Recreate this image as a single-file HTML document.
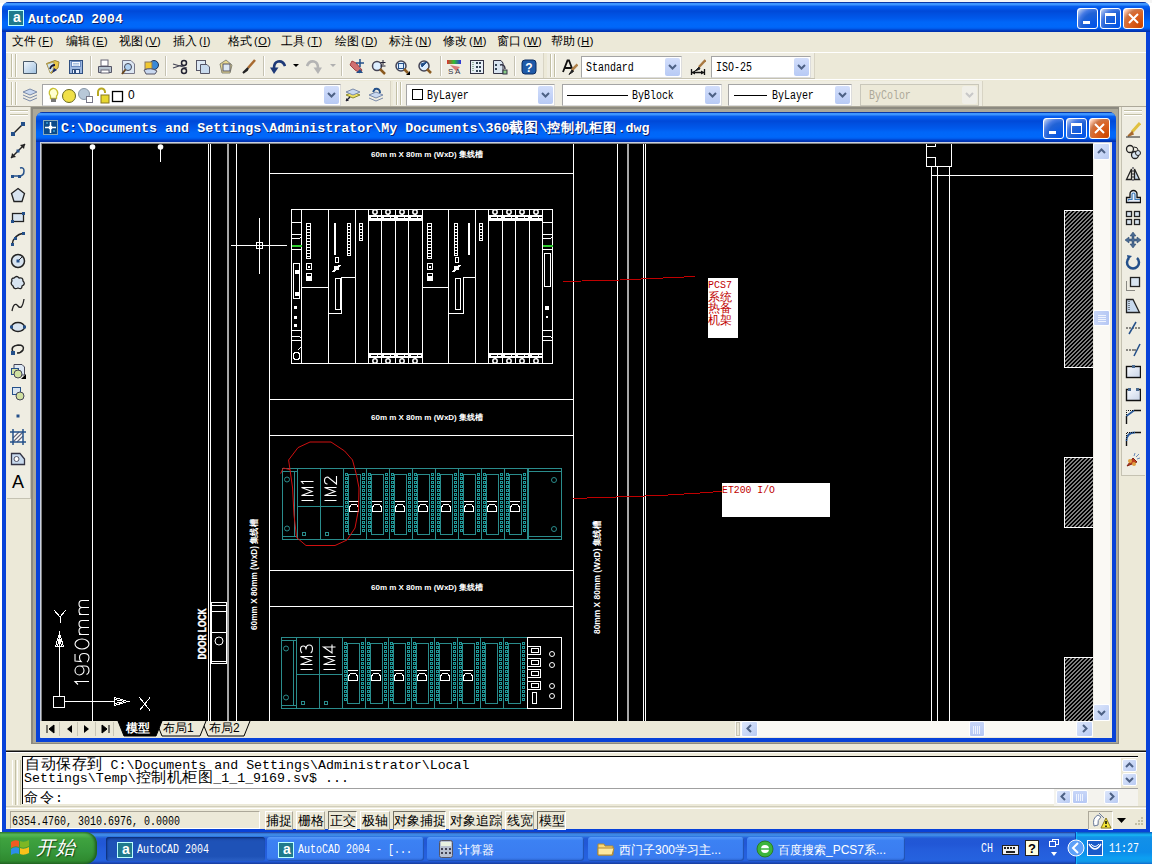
<!DOCTYPE html><html><head><meta charset="utf-8"><style>
*{margin:0;padding:0;box-sizing:border-box}
html,body{width:1152px;height:864px;overflow:hidden;background:#fff;font-family:"Liberation Sans",sans-serif;font-size:12px;color:#000}
.a{position:absolute}
.mono{font-family:"Liberation Mono",monospace}
.cjk{font-family:"Liberation Sans",sans-serif}
.tb{background:#ECE9D8}
.wbtn{position:absolute;width:21px;height:21px;border:1px solid #fff;border-radius:3px;
 background:radial-gradient(circle at 90% 90%,#0054e9 0%,#2263d5 55%,#4479e4 70%,#a3bbec 90%,#fff 100%)}
.wbtn.cl{background:radial-gradient(circle at 90% 90%,#cc4600 0%,#dc6527 55%,#cd7546 70%,#ffccb2 90%,#fff 100%)}
.combo{position:absolute;background:#fff;border:1px solid;border-color:#A5A5A5 #DCDCDC #DCDCDC #A5A5A5}
.dd{position:absolute;right:1px;top:1px;bottom:1px;width:15px;background:linear-gradient(#D2DEFB,#B7CAF5);border-radius:2px}
.grip{position:absolute;width:2px;border-left:1px solid #C2BFA5;border-right:1px solid #fff}
.sep{position:absolute;width:2px;border-left:1px solid #C5C2B2;border-right:1px solid #fff}
.stb{position:absolute;top:812px;height:17px;font-size:12px;line-height:16px;text-align:center}
.tbtn{position:absolute;top:837px;height:24px;border-radius:3px;color:#fff;font-size:12px;line-height:25px;white-space:nowrap;overflow:hidden}
</style></head><body>
<div class="a" style="left:0;top:0;width:1152px;height:3px;background:#F4F4F4"></div>
<div class="a" style="left:2px;top:2px;width:1148px;height:830px;background:#0842D8;border-radius:7px 7px 0 0"></div>
<div class="a" style="left:2px;top:2px;width:1148px;height:30px;background:linear-gradient(180deg,#0838A8 0px,#0838A8 1px,#3D95FF 1px,#3D95FF 3px,#0A5FEE 4px,#0058EE 6px,#0049D8 9px,#0050E0 12px,#0058EA 16px,#0066F8 20px,#0068FA 25px,#0058E8 27px,#0040C8 28px,#002EA8 30px);border-radius:7px 7px 0 0"></div>
<div class="a tb" style="left:6px;top:32px;width:1140px;height:797px"></div>
<div class="a" style="left:8px;top:10px;width:16px;height:16px;background:#1F7A8C;border:1px solid #BFF"><div class="a" style="left:2px;top:-2px;width:12px;height:16px;color:#fff;font:bold 14px 'Liberation Sans';text-align:center">a</div></div>
<div class="a mono" style="left:28px;top:12px;color:#fff;font-weight:bold;font-size:13px;line-height:16px;text-shadow:1px 1px 0 #0A1E6E;letter-spacing:0.1px">AutoCAD 2004</div>
<div class="wbtn" style="left:1077px;top:8px"><div class="a" style="left:5px;top:12px;width:7px;height:3px;background:#fff"></div></div><div class="wbtn" style="left:1100px;top:8px"><div class="a" style="left:4px;top:4px;width:11px;height:11px;border:1px solid #fff;border-top-width:3px"></div></div><div class="wbtn cl" style="left:1123px;top:8px"><svg class="a" style="left:3px;top:3px" width="13" height="13"><path d="M2 2L11 11M11 2L2 11" stroke="#fff" stroke-width="2"/></svg></div>
<div class="a" style="left:12px;top:34px;font-size:12px;line-height:14px;white-space:nowrap">文件<span style="font-size:11px;margin-left:2px;letter-spacing:0.5px">(<u>F</u>)</span></div>
<div class="a" style="left:66px;top:34px;font-size:12px;line-height:14px;white-space:nowrap">编辑<span style="font-size:11px;margin-left:2px;letter-spacing:0.5px">(<u>E</u>)</span></div>
<div class="a" style="left:119px;top:34px;font-size:12px;line-height:14px;white-space:nowrap">视图<span style="font-size:11px;margin-left:2px;letter-spacing:0.5px">(<u>V</u>)</span></div>
<div class="a" style="left:173px;top:34px;font-size:12px;line-height:14px;white-space:nowrap">插入<span style="font-size:11px;margin-left:2px;letter-spacing:0.5px">(<u>I</u>)</span></div>
<div class="a" style="left:228px;top:34px;font-size:12px;line-height:14px;white-space:nowrap">格式<span style="font-size:11px;margin-left:2px;letter-spacing:0.5px">(<u>O</u>)</span></div>
<div class="a" style="left:281px;top:34px;font-size:12px;line-height:14px;white-space:nowrap">工具<span style="font-size:11px;margin-left:2px;letter-spacing:0.5px">(<u>T</u>)</span></div>
<div class="a" style="left:335px;top:34px;font-size:12px;line-height:14px;white-space:nowrap">绘图<span style="font-size:11px;margin-left:2px;letter-spacing:0.5px">(<u>D</u>)</span></div>
<div class="a" style="left:389px;top:34px;font-size:12px;line-height:14px;white-space:nowrap">标注<span style="font-size:11px;margin-left:2px;letter-spacing:0.5px">(<u>N</u>)</span></div>
<div class="a" style="left:443px;top:34px;font-size:12px;line-height:14px;white-space:nowrap">修改<span style="font-size:11px;margin-left:2px;letter-spacing:0.5px">(<u>M</u>)</span></div>
<div class="a" style="left:497px;top:34px;font-size:12px;line-height:14px;white-space:nowrap">窗口<span style="font-size:11px;margin-left:2px;letter-spacing:0.5px">(<u>W</u>)</span></div>
<div class="a" style="left:551px;top:34px;font-size:12px;line-height:14px;white-space:nowrap">帮助<span style="font-size:11px;margin-left:2px;letter-spacing:0.5px">(<u>H</u>)</span></div>
<div class="a" style="left:6px;top:52px;width:1140px;height:1px;background:#fff"></div>
<div class="a" style="left:8px;top:78px;width:807px;height:1px;background:#C5C2B2"></div>
<div class="a" style="left:6px;top:79px;width:1140px;height:1px;background:#fff"></div>
<div class="a" style="left:6px;top:106px;width:1140px;height:1px;background:#ACA899"></div>
<div class="a" style="left:8px;top:53px;width:536px;height:25px;background:#EFEDE2;border-right:1px solid #D8D4C4"></div>
<div class="grip" style="left:11px;top:54px;height:23px"></div><div class="grip" style="left:15px;top:54px;height:23px"></div>
<div class="a" style="left:547px;top:53px;width:268px;height:25px;background:#EFEDE2;border-right:1px solid #D8D4C4"></div>
<div class="grip" style="left:550px;top:54px;height:23px"></div><div class="grip" style="left:554px;top:54px;height:23px"></div>
<div class="a" style="left:8px;top:81px;width:383px;height:25px;background:#EFEDE2;border-right:1px solid #D8D4C4"></div>
<div class="grip" style="left:11px;top:82px;height:23px"></div><div class="grip" style="left:15px;top:82px;height:23px"></div>
<div class="a" style="left:393px;top:81px;width:590px;height:25px;background:#EFEDE2;border-right:1px solid #D8D4C4"></div>
<div class="grip" style="left:396px;top:82px;height:23px"></div><div class="grip" style="left:400px;top:82px;height:23px"></div>
<div class="sep" style="left:90px;top:56px;height:20px"></div>
<div class="sep" style="left:165px;top:56px;height:20px"></div>
<div class="sep" style="left:263px;top:56px;height:20px"></div>
<div class="sep" style="left:341px;top:56px;height:20px"></div>
<div class="sep" style="left:440px;top:56px;height:20px"></div>
<div class="sep" style="left:514px;top:56px;height:20px"></div>
<svg class="a" style="left:22px;top:59px" width="16" height="16" viewBox="0 0 16 16"><defs><linearGradient id="gn" x1="0" y1="0" x2="1" y2="1"><stop offset="0" stop-color="#F4F8FC"/><stop offset="1" stop-color="#9EC0E0"/></linearGradient></defs><path d="M1.5 2.5H12L14.5 5V14.5H1.5Z" fill="url(#gn)" stroke="#4A5A6A"/></svg>
<svg class="a" style="left:45px;top:59px" width="16" height="16" viewBox="0 0 16 16"><path d="M1.5 4.5L10 1.5L14 3L13 9L6 14.5Z" fill="#EBC848" stroke="#A08838"/><path d="M2 5L9 3L8 11L5 14Z" fill="#CFE4F0" stroke="#A08838" stroke-width="0.6"/><path d="M5 10Q6 6 10 6" fill="none" stroke="#1A1A3A" stroke-width="1.8"/><path d="M7 14L12 11L9 9Z" fill="#1A2A70"/></svg>
<svg class="a" style="left:68px;top:59px" width="16" height="16" viewBox="0 0 16 16"><rect x="1.5" y="1.5" width="13" height="13" fill="#9DB8E0" stroke="#2F4F80"/><rect x="3.5" y="2.5" width="9" height="5" fill="#F4F8FF" stroke="#6A8AC0"/><path d="M5 4.5H11M5 6H11" stroke="#A8C0E0"/><rect x="4.5" y="10.5" width="7" height="4" fill="#E8F0FF" stroke="#2F4F80"/><rect x="6" y="11" width="2" height="3" fill="#2F4F80"/></svg>
<svg class="a" style="left:97px;top:59px" width="16" height="16" viewBox="0 0 16 16"><rect x="4" y="1" width="7" height="6" fill="#fff" stroke="#667"/><path d="M1.5 7.5H14.5V13.5H1.5Z" fill="#B8C4D0" stroke="#556"/><rect x="4" y="11" width="8" height="3" fill="#fff" stroke="#667"/></svg>
<svg class="a" style="left:120px;top:59px" width="16" height="16" viewBox="0 0 16 16"><path d="M2.5 1.5H11L14.5 5V14.5H2.5Z" fill="#DDE8F4" stroke="#778"/><circle cx="8" cy="8" r="3.5" fill="#AFD0F0" stroke="#445"/><path d="M5.5 10.5L2 15" stroke="#6A4A20" stroke-width="2"/></svg>
<svg class="a" style="left:143px;top:59px" width="16" height="16" viewBox="0 0 16 16"><circle cx="11" cy="6" r="4.5" fill="#3A8AD8" stroke="#235"/><rect x="2" y="3" width="7" height="7" fill="#F0C830" stroke="#876"/><path d="M1 11Q8 8 14 12L12 15H3Z" fill="#C8D8F0" stroke="#556"/></svg>
<svg class="a" style="left:172px;top:59px" width="16" height="16" viewBox="0 0 16 16"><path d="M1 5L15 9M1 9L10 6" stroke="#445" stroke-width="1.2"/><circle cx="12" cy="4" r="2.5" fill="none" stroke="#223" stroke-width="1.5"/><circle cx="12" cy="12" r="2.5" fill="none" stroke="#223" stroke-width="1.5"/></svg>
<svg class="a" style="left:195px;top:59px" width="16" height="16" viewBox="0 0 16 16"><rect x="1.5" y="1.5" width="9" height="10" fill="#DDE8F4" stroke="#556"/><path d="M5.5 5.5H12L14.5 8V14.5H5.5Z" fill="#C8DAEE" stroke="#556"/></svg>
<svg class="a" style="left:218px;top:59px" width="16" height="16" viewBox="0 0 16 16"><path d="M2 5L8 1L14 6L12 14L4 14Z" fill="#E8D890" stroke="#887"/><rect x="5" y="5" width="7" height="7" fill="#DDE8F4" stroke="#556"/></svg>
<svg class="a" style="left:241px;top:59px" width="16" height="16" viewBox="0 0 16 16"><path d="M14 1L7 9" stroke="#A86A30" stroke-width="2.5"/><path d="M7 9L2 14L6 11Z" fill="#222" stroke="#222" stroke-width="2"/></svg>
<svg class="a" style="left:270px;top:59px" width="16" height="16" viewBox="0 0 16 16"><path d="M15 7Q13 1.5 8 2.5Q4 3.5 4 9" stroke="#1E3A78" stroke-width="2.6" fill="none"/><path d="M0 8.5H8.5L4 15Z" fill="#1E3A78"/></svg>
<svg class="a" style="left:306px;top:59px" width="16" height="16" viewBox="0 0 16 16"><path d="M1 7Q3 1.5 8 2.5Q12 3.5 12 9" stroke="#B4B4B4" stroke-width="2.6" fill="none"/><path d="M16 8.5H7.5L12 15Z" fill="#B4B4B4"/></svg>
<svg class="a" style="left:348px;top:59px" width="16" height="16" viewBox="0 0 16 16"><path d="M2 6L7 11L12 14L14 11L8 4L4 2Z" fill="#D07070" stroke="#A04040"/><path d="M8 14L12 10L15 14Z" fill="#24508A"/><path d="M12 0V8M8 4H16" stroke="#24508A" stroke-width="1.5"/></svg>
<svg class="a" style="left:371px;top:59px" width="16" height="16" viewBox="0 0 16 16"><circle cx="6" cy="7" r="4.5" fill="#DDEEFF" stroke="#445" stroke-width="1.5"/><path d="M9 10L14 15" stroke="#8A5A20" stroke-width="2.5"/><path d="M12 1V6M9.5 3.5H14.5M9.5 7H14.5" stroke="#223"/></svg>
<svg class="a" style="left:394px;top:59px" width="16" height="16" viewBox="0 0 16 16"><circle cx="7" cy="7" r="5" fill="#DDEEFF" stroke="#445" stroke-width="1.5"/><rect x="4.5" y="4.5" width="5" height="5" fill="none" stroke="#24508A"/><path d="M10 10L14 14" stroke="#8A5A20" stroke-width="2.5"/><path d="M12 16H16V12Z" fill="#000"/></svg>
<svg class="a" style="left:417px;top:59px" width="16" height="16" viewBox="0 0 16 16"><circle cx="7" cy="7" r="5" fill="#DDEEFF" stroke="#445" stroke-width="1.5"/><path d="M10 10L14 14" stroke="#8A5A20" stroke-width="2.5"/><path d="M10 3L5 8L4 5Z" fill="#24508A" stroke="#24508A"/></svg>
<svg class="a" style="left:446px;top:59px" width="16" height="16" viewBox="0 0 16 16"><rect x="1" y="1" width="14" height="4" fill="url(#rb)"/><defs><linearGradient id="rb"><stop offset="0" stop-color="#E03030"/><stop offset="0.5" stop-color="#30C030"/><stop offset="1" stop-color="#3030E0"/></linearGradient></defs><path d="M4 6L14 8L10 12Z" fill="#D87878"/><text x="2" y="15" font-size="8" fill="#334">S A</text></svg>
<svg class="a" style="left:469px;top:59px" width="16" height="16" viewBox="0 0 16 16"><rect x="1.5" y="1.5" width="13" height="13" fill="#E8F0F8" stroke="#334"/><path d="M4 3V13" stroke="#4A7A4A" stroke-dasharray="1 1"/><rect x="7" y="3" width="2" height="2" fill="#345"/><rect x="10" y="3" width="2" height="2" fill="#345"/><rect x="7" y="7" width="2" height="2" fill="#345"/><rect x="10" y="7" width="2" height="2" fill="#345"/><rect x="7" y="11" width="2" height="2" fill="#345"/><rect x="10" y="11" width="2" height="2" fill="#345"/></svg>
<svg class="a" style="left:492px;top:59px" width="16" height="16" viewBox="0 0 16 16"><path d="M1.5 1.5H9L11 4V14.5H1.5Z" fill="#D8E4F0" stroke="#334"/><rect x="3" y="5" width="2" height="2" fill="#345"/><rect x="3" y="9" width="2" height="2" fill="#345"/><path d="M8 6Q13 5 13 10" fill="none" stroke="#334" stroke-width="1.5"/><rect x="11" y="11" width="4" height="4" fill="#8C8" stroke="#334"/></svg>
<svg class="a" style="left:521px;top:59px" width="16" height="16" viewBox="0 0 16 16"><rect x="1" y="1" width="14" height="14" rx="3" fill="#1E5AA8" stroke="#0A2A60"/><text x="8" y="13" text-anchor="middle" font-size="12" font-weight="bold" fill="#fff" font-family="Liberation Sans">?</text></svg>
<svg class="a" style="left:562px;top:59px" width="16" height="16" viewBox="0 0 16 16"><path d="M1 13L5.5 1.5H7L11 12M3 9H9" fill="none" stroke="#111" stroke-width="1.8"/><path d="M15.5 5.5L10 11" stroke="#B08048" stroke-width="2.5"/><path d="M10 11L7 15.5L11.5 12.5Z" fill="#222" stroke="#222"/></svg>
<svg class="a" style="left:690px;top:59px" width="16" height="16" viewBox="0 0 16 16"><path d="M15.5 1L9 8" stroke="#A87840" stroke-width="2.5"/><path d="M9 8L5 12L10 10Z" fill="#222" stroke="#222"/><path d="M1.5 13.5H14.5M1.5 10V16M14.5 10V16" stroke="#111" stroke-width="1.3"/><path d="M1.5 13.5L5 11.5V15.5Z M14.5 13.5L11 11.5V15.5Z" fill="#111"/></svg>
<svg class="a" style="left:293px;top:64px" width="6" height="4"><path d="M0 0H6L3 3Z" fill="#000"/></svg>
<svg class="a" style="left:330px;top:64px" width="6" height="4"><path d="M0 0H6L3 3Z" fill="#B0B0B0"/></svg>
<div class="combo" style="left:581px;top:56px;width:101px;height:22px;background:#fff;border-color:#A5A5A5 #DCDCDC #DCDCDC #A5A5A5"><div class="a mono" style="left:4px;top:4px;font-size:12px;line-height:14px;transform:scaleX(0.83);transform-origin:0 0">Standard</div><div class="dd" style="height:auto;"><svg class="a" style="left:3px;top:6px" width="9" height="6"><path d="M1 1L4.5 4.5L8 1" fill="none" stroke="#4D6185" stroke-width="2"/></svg></div></div>
<div class="combo" style="left:711px;top:56px;width:100px;height:22px;background:#fff;border-color:#A5A5A5 #DCDCDC #DCDCDC #A5A5A5"><div class="a mono" style="left:4px;top:4px;font-size:12px;line-height:14px;transform:scaleX(0.83);transform-origin:0 0">ISO-25</div><div class="dd" style="height:auto;"><svg class="a" style="left:3px;top:6px" width="9" height="6"><path d="M1 1L4.5 4.5L8 1" fill="none" stroke="#4D6185" stroke-width="2"/></svg></div></div>
<svg class="a" style="left:22px;top:87px" width="16" height="16" viewBox="0 0 16 16"><path d="M1 5L8 2L15 5L8 8Z" fill="#C8D8F0" stroke="#7A8AA8"/><path d="M1 8L8 11L15 8" fill="none" stroke="#7A8AA8"/><path d="M1 11L8 14L15 11" fill="none" stroke="#7A8AA8"/></svg>
<div class="combo" style="left:42px;top:84px;width:299px;height:22px;background:#fff;border-color:#A5A5A5 #DCDCDC #DCDCDC #A5A5A5"><svg class="a" style="left:4px;top:2px" width="86" height="17"><path d="M5.5 1.5A4.5 4.5 0 0 1 9.5 9V11.5H3.5V9A4.5 4.5 0 0 1 5.5 1.5Z" fill="#FFFFD0" stroke="#C8C030" stroke-width="1.3"/><rect x="4" y="11.5" width="5" height="3.5" fill="#777"/><circle cx="22" cy="9" r="6.5" fill="#F0E048" stroke="#6A6A20"/><circle cx="37" cy="7" r="5.5" fill="#B8C8D8" stroke="#8898A8"/><rect x="39.5" y="9.5" width="6" height="6" fill="#fff" stroke="#778"/><path d="M51 9V5A3.5 3.5 0 0 1 58 5V6" fill="none" stroke="#B8A820" stroke-width="2"/><rect x="54" y="8" width="8" height="8" fill="#E8D830" stroke="#887820"/><rect x="65.5" y="4.5" width="10" height="10" fill="#fff" stroke="#000" stroke-width="1.3"/></svg><div class="a" style="left:85px;top:2px;font-size:12px;line-height:16px">0</div><div class="dd" style="height:auto;"><svg class="a" style="left:3px;top:6px" width="9" height="6"><path d="M1 1L4.5 4.5L8 1" fill="none" stroke="#4D6185" stroke-width="2"/></svg></div></div>
<svg class="a" style="left:345px;top:87px" width="16" height="16" viewBox="0 0 16 16"><path d="M1 8L8 5L15 8L8 11Z" fill="#F0E060" stroke="#8A8A30"/><path d="M1 5L8 2L15 5L8 8Z" fill="#C8D8F0" stroke="#7A8AA8"/><path d="M1 14L5 10" stroke="#223" stroke-width="1.5"/><path d="M1 14L1 11L4 14Z" fill="#223"/></svg>
<svg class="a" style="left:368px;top:87px" width="16" height="16" viewBox="0 0 16 16"><path d="M1 8L8 5L15 8L8 11Z" fill="#C8D8F0" stroke="#7A8AA8"/><path d="M1 11L8 14L15 11" fill="none" stroke="#7A8AA8"/><path d="M12 6Q12 1 7 2L5 5" fill="none" stroke="#24508A" stroke-width="2"/></svg>
<div class="combo" style="left:406px;top:84px;width:149px;height:22px;background:#fff;border-color:#A5A5A5 #DCDCDC #DCDCDC #A5A5A5"><svg class="a" style="left:5px;top:4px" width="12" height="12"><rect x="0.5" y="0.5" width="10" height="10" fill="#fff" stroke="#000"/></svg><div class="a mono" style="left:20px;top:4px;font-size:12px;line-height:14px;transform:scaleX(0.83);transform-origin:0 0">ByLayer</div><div class="dd" style="height:auto;"><svg class="a" style="left:3px;top:6px" width="9" height="6"><path d="M1 1L4.5 4.5L8 1" fill="none" stroke="#4D6185" stroke-width="2"/></svg></div></div>
<div class="combo" style="left:562px;top:84px;width:160px;height:22px;background:#fff;border-color:#A5A5A5 #DCDCDC #DCDCDC #A5A5A5"><div class="a" style="left:4px;top:10px;width:61px;height:1px;background:#000"></div><div class="a mono" style="left:69px;top:4px;font-size:12px;line-height:14px;transform:scaleX(0.83);transform-origin:0 0">ByBlock</div><div class="dd" style="height:auto;"><svg class="a" style="left:3px;top:6px" width="9" height="6"><path d="M1 1L4.5 4.5L8 1" fill="none" stroke="#4D6185" stroke-width="2"/></svg></div></div>
<div class="combo" style="left:728px;top:84px;width:124px;height:22px;background:#fff;border-color:#A5A5A5 #DCDCDC #DCDCDC #A5A5A5"><div class="a" style="left:5px;top:10px;width:33px;height:1px;background:#000"></div><div class="a mono" style="left:43px;top:4px;font-size:12px;line-height:14px;transform:scaleX(0.83);transform-origin:0 0">ByLayer</div><div class="dd" style="height:auto;"><svg class="a" style="left:3px;top:6px" width="9" height="6"><path d="M1 1L4.5 4.5L8 1" fill="none" stroke="#4D6185" stroke-width="2"/></svg></div></div>
<div class="combo" style="left:860px;top:84px;width:119px;height:22px;background:#ECE9D8;border-color:#C9C7BA"><div class="a mono" style="left:8px;top:4px;font-size:12px;line-height:14px;color:#ACA899;transform:scaleX(0.83);transform-origin:0 0">ByColor</div><div class="dd" style="height:auto;background:#F0EFE8"><svg class="a" style="left:3px;top:6px" width="9" height="6"><path d="M1 1L4.5 4.5L8 1" fill="none" stroke="#C8C8C8" stroke-width="2"/></svg></div></div>
<div class="a" style="left:31px;top:107px;width:1088px;height:637px;background:#8C8A80"></div>
<div class="a" style="left:33px;top:109px;width:1085px;height:634px;background:#ABA899"></div>
<div class="a" style="left:7px;top:107px;width:24px;height:392px;background:#EFEDE2;border-right:1px solid #C5C2B2;border-bottom:1px solid #C5C2B2"></div>
<div class="a" style="left:10px;top:110px;width:18px;height:2px;border-top:1px solid #C2BFA5;border-bottom:1px solid #fff"></div><div class="a" style="left:10px;top:114px;width:18px;height:2px;border-top:1px solid #C2BFA5;border-bottom:1px solid #fff"></div>
<div class="a" style="left:1121px;top:107px;width:24px;height:369px;background:#EFEDE2;border-left:1px solid #C5C2B2;border-bottom:1px solid #C5C2B2"></div>
<div class="a" style="left:1124px;top:110px;width:18px;height:2px;border-top:1px solid #C2BFA5;border-bottom:1px solid #fff"></div><div class="a" style="left:1124px;top:114px;width:18px;height:2px;border-top:1px solid #C2BFA5;border-bottom:1px solid #fff"></div>
<svg class="a" style="left:10px;top:121px" width="16" height="16" viewBox="0 0 16 16"><path d="M3 13L13 3" stroke="#222" stroke-width="1.5"/><rect x="1" y="11" width="4" height="4" fill="#24508A"/><rect x="11" y="1" width="4" height="4" fill="#24508A"/></svg>
<svg class="a" style="left:10px;top:143px" width="16" height="16" viewBox="0 0 16 16"><path d="M1 15L15 1" stroke="#222" stroke-width="1.5"/><path d="M15 1L10 2L14 6Z M1 15L6 14L2 10Z" fill="#222"/><rect x="6.5" y="6.5" width="3" height="3" fill="#24508A"/></svg>
<svg class="a" style="left:10px;top:165px" width="16" height="16" viewBox="0 0 16 16"><path d="M2 11H9Q14 11 14 6Q14 2 10 3" fill="none" stroke="#24508A" stroke-width="1.5"/><rect x="1" y="10" width="3" height="3" fill="#24508A"/><rect x="8" y="10" width="3" height="3" fill="#24508A"/></svg>
<svg class="a" style="left:10px;top:187px" width="16" height="16" viewBox="0 0 16 16"><path d="M8 1.5L14.5 6.5L12 14.5H4L1.5 6.5Z" fill="#D8E4F0" stroke="#222" stroke-width="1.3"/></svg>
<svg class="a" style="left:10px;top:209px" width="16" height="16" viewBox="0 0 16 16"><rect x="2.5" y="4.5" width="11" height="8" fill="#D8E4F0" stroke="#222" stroke-width="1.3"/><rect x="1" y="11" width="3" height="3" fill="#24508A"/><rect x="12" y="3" width="3" height="3" fill="#24508A"/></svg>
<svg class="a" style="left:10px;top:231px" width="16" height="16" viewBox="0 0 16 16"><path d="M2 14Q3 4 14 2" fill="none" stroke="#222" stroke-width="1.5"/><rect x="1" y="12" width="3" height="3" fill="#24508A"/><rect x="4" y="6" width="3" height="3" fill="#24508A"/><rect x="12" y="1" width="3" height="3" fill="#24508A"/></svg>
<svg class="a" style="left:10px;top:253px" width="16" height="16" viewBox="0 0 16 16"><circle cx="8" cy="8" r="6.5" fill="#D8E4F0" stroke="#222" stroke-width="1.5"/><path d="M8 8L12 4" stroke="#222"/><rect x="6.5" y="6.5" width="3" height="3" fill="#24508A"/></svg>
<svg class="a" style="left:10px;top:275px" width="16" height="16" viewBox="0 0 16 16"><path d="M4 3Q7 0 9 3Q13 2 13 6Q16 9 12 11Q12 15 8 13Q4 15 3 11Q0 9 2 6Q1 3 4 3Z" fill="#D8E4F0" stroke="#222" stroke-width="1.3"/></svg>
<svg class="a" style="left:10px;top:297px" width="16" height="16" viewBox="0 0 16 16"><path d="M2 14Q4 4 8 9Q12 14 14 2" fill="none" stroke="#222" stroke-width="1.3"/></svg>
<svg class="a" style="left:10px;top:319px" width="16" height="16" viewBox="0 0 16 16"><ellipse cx="8" cy="8" rx="6.5" ry="4.5" fill="#D8E4F0" stroke="#222" stroke-width="1.5"/><rect x="0" y="6.5" width="3" height="3" fill="#24508A"/><rect x="13" y="6.5" width="3" height="3" fill="#24508A"/></svg>
<svg class="a" style="left:10px;top:341px" width="16" height="16" viewBox="0 0 16 16"><path d="M3 11Q0 5 8 4Q15 4 13 9Q11 12 7 12" fill="none" stroke="#222" stroke-width="1.5"/><rect x="1" y="10" width="4" height="4" fill="#24508A"/></svg>
<svg class="a" style="left:10px;top:363px" width="16" height="16" viewBox="0 0 16 16"><path d="M4 1.5H12L14.5 4V12H4Z" fill="#DDE8F4" stroke="#445"/><rect x="1.5" y="5.5" width="7" height="6" fill="#D0E0A0" stroke="#24508A"/><circle cx="8" cy="11" r="4" fill="#D0E0A0" stroke="#445"/><path d="M11 16H16V11Z" fill="#000"/></svg>
<svg class="a" style="left:10px;top:385px" width="16" height="16" viewBox="0 0 16 16"><rect x="2.5" y="2.5" width="8" height="7" fill="#D8E4F0" stroke="#24508A"/><circle cx="10" cy="11" r="4" fill="#D0E0A0" stroke="#445"/></svg>
<svg class="a" style="left:10px;top:407px" width="16" height="16" viewBox="0 0 16 16"><rect x="6.5" y="7.5" width="3" height="3" fill="#24508A"/></svg>
<svg class="a" style="left:10px;top:429px" width="16" height="16" viewBox="0 0 16 16"><rect x="3" y="3" width="10" height="10" fill="#fff"/><path d="M3 9L9 3M3 13L13 3M7 13L13 7" stroke="#667" stroke-width="1.2"/><path d="M0 3H16M0 13H16M3 0V16M13 0V16" stroke="#24508A" stroke-width="1.5"/></svg>
<svg class="a" style="left:10px;top:451px" width="16" height="16" viewBox="0 0 16 16"><path d="M1.5 2.5H10L14.5 8V13.5H1.5Z" fill="#C8DAEE" stroke="#334" stroke-width="1.3"/><circle cx="6.5" cy="8" r="2.5" fill="#fff" stroke="#556"/></svg>
<svg class="a" style="left:10px;top:473px" width="16" height="16" viewBox="0 0 16 16"><text x="8" y="15" text-anchor="middle" font-size="18" fill="#000" font-family="Liberation Sans">A</text></svg>
<svg class="a" style="left:1125px;top:122px" width="16" height="16" viewBox="0 0 16 16"><path d="M15 1L7 10" stroke="#E0C040" stroke-width="3"/><path d="M7 10L3 14L8 12Z" fill="#A86A30" stroke="#A86A30" stroke-width="1.5"/><path d="M1 15H15" stroke="#222"/></svg>
<svg class="a" style="left:1125px;top:144px" width="16" height="16" viewBox="0 0 16 16"><circle cx="5" cy="5" r="3.5" fill="none" stroke="#222" stroke-width="1.3"/><circle cx="10" cy="11" r="3.5" fill="#D8E4F0" stroke="#222" stroke-width="1.3"/><circle cx="13" cy="9" r="2.5" fill="#D8E4F0" stroke="#222"/><path d="M9 3Q13 3 13 6" fill="none" stroke="#222"/></svg>
<svg class="a" style="left:1125px;top:166px" width="16" height="16" viewBox="0 0 16 16"><path d="M8 1V15" stroke="#223" stroke-dasharray="2 1"/><path d="M6.5 3L1.5 13.5H6.5Z" fill="none" stroke="#222" stroke-width="1.3"/><path d="M9.5 3L14.5 13.5H9.5Z" fill="#C8DAEE" stroke="#222" stroke-width="1.3"/></svg>
<svg class="a" style="left:1125px;top:188px" width="16" height="16" viewBox="0 0 16 16"><path d="M1.5 14.5V9.5H5V6A3.5 3.5 0 0 1 12 6V9.5H15.5V14.5Z" fill="#E8EEF8" stroke="#111" stroke-width="1.3"/><path d="M3.5 12.5V11.5H7V6.5A1.5 1.5 0 0 1 10 6.5V11.5H15" fill="none" stroke="#3A7AB8" stroke-width="1.2"/></svg>
<svg class="a" style="left:1125px;top:210px" width="16" height="16" viewBox="0 0 16 16"><rect x="1.5" y="1.5" width="5" height="5" fill="#D8E4F0" stroke="#222" stroke-width="1.3"/><rect x="9.5" y="1.5" width="5" height="5" fill="#D8E4F0" stroke="#222" stroke-width="1.3"/><rect x="1.5" y="9.5" width="5" height="5" fill="#D8E4F0" stroke="#222" stroke-width="1.3"/><rect x="9.5" y="9.5" width="5" height="5" fill="#D8E4F0" stroke="#222" stroke-width="1.3"/></svg>
<svg class="a" style="left:1125px;top:232px" width="16" height="16" viewBox="0 0 16 16"><path d="M8 0L11 4H9V7H12V5L16 8L12 11V9H9V12H11L8 16L5 12H7V9H4V11L0 8L4 5V7H7V4H5Z" fill="#4A6A90" stroke="#24406A" stroke-width="0.5"/></svg>
<svg class="a" style="left:1125px;top:254px" width="16" height="16" viewBox="0 0 16 16"><path d="M4 4A6 6 0 1 0 12 4" fill="none" stroke="#24508A" stroke-width="2.5"/><path d="M2 1L7 2L3 6Z" fill="#24508A"/></svg>
<svg class="a" style="left:1125px;top:276px" width="16" height="16" viewBox="0 0 16 16"><rect x="5.5" y="1.5" width="9" height="9" fill="#D8E4F0" stroke="#222" stroke-width="1.3"/><path d="M1.5 5.5V14.5H10.5" fill="none" stroke="#222" stroke-dasharray="1 1"/></svg>
<svg class="a" style="left:1125px;top:298px" width="16" height="16" viewBox="0 0 16 16"><path d="M1.5 1.5H8L14.5 14.5H1.5Z" fill="#C8DAEE" stroke="#222" stroke-width="1.3"/><path d="M4 3V13" stroke="#222" stroke-dasharray="1 1"/></svg>
<svg class="a" style="left:1125px;top:320px" width="16" height="16" viewBox="0 0 16 16"><path d="M1 8H15" stroke="#222" stroke-dasharray="2 1"/><path d="M4 14L11 2" stroke="#24508A" stroke-width="1.5"/></svg>
<svg class="a" style="left:1125px;top:342px" width="16" height="16" viewBox="0 0 16 16"><path d="M1 8H9" stroke="#222" stroke-dasharray="2 1"/><path d="M9 14L15 2" stroke="#24508A" stroke-width="1.5"/><path d="M9 8H11" stroke="#222"/></svg>
<svg class="a" style="left:1125px;top:364px" width="16" height="16" viewBox="0 0 16 16"><defs><linearGradient id="gb" x1="0" y1="0" x2="1" y2="1"><stop offset="0" stop-color="#F8FAFE"/><stop offset="1" stop-color="#C8D4E8"/></linearGradient></defs><rect x="1.5" y="2.5" width="14" height="11" fill="url(#gb)" stroke="#111" stroke-width="1.4"/><rect x="7" y="1" width="3" height="3" fill="#4A6A90"/></svg>
<svg class="a" style="left:1125px;top:386px" width="16" height="16" viewBox="0 0 16 16"><rect x="1.5" y="3.5" width="14" height="11" fill="url(#gb)" stroke="none"/><path d="M3.5 3.5H1.5V14.5H15.5V3.5H13.5" fill="none" stroke="#111" stroke-width="1.4"/><rect x="3" y="2" width="3" height="3" fill="#4A6A90"/><rect x="11" y="2" width="3" height="3" fill="#4A6A90"/></svg>
<svg class="a" style="left:1125px;top:408px" width="16" height="16" viewBox="0 0 16 16"><path d="M1.5 16V8M9 2.5H16" fill="none" stroke="#111" stroke-width="1.4"/><path d="M1.5 8L9 2.5" stroke="#2A5A9A" stroke-width="1.6"/><path d="M1.5 7V2.5H8" fill="none" stroke="#111" stroke-dasharray="1 1"/></svg>
<svg class="a" style="left:1125px;top:430px" width="16" height="16" viewBox="0 0 16 16"><path d="M1.5 16V11M10 2.5H16" fill="none" stroke="#111" stroke-width="1.4"/><path d="M1.5 11Q1.5 2.5 10 2.5" fill="none" stroke="#2A5A9A" stroke-width="1.8"/><path d="M1.5 10V2.5H9" fill="none" stroke="#111" stroke-dasharray="1 1"/></svg>
<svg class="a" style="left:1125px;top:452px" width="16" height="16" viewBox="0 0 16 16"><path d="M2 14L8 6L12 10Z" fill="#C04020" stroke="#802010"/><circle cx="5" cy="9" r="2" fill="#E0A040"/><circle cx="9" cy="12" r="2" fill="#E0A040"/><path d="M11 5L14 2M12 7L15 6M9 4L10 1" stroke="#6A8AB8"/></svg><div class="a" style="left:36px;top:112px;width:1080px;height:630px;background:#0842D8;border-radius:7px 7px 0 0"></div>
<div class="a" style="left:36px;top:112px;width:1080px;height:30px;background:linear-gradient(180deg,#0838A8 0px,#0838A8 1px,#3D95FF 1px,#3D95FF 3px,#0A5FEE 4px,#0058EE 6px,#0049D8 9px,#0050E0 12px,#0058EA 16px,#0066F8 20px,#0068FA 25px,#0058E8 27px,#0040C8 28px,#002EA8 30px);border-radius:7px 7px 0 0"></div>
<div class="a" style="left:40px;top:142px;width:1072px;height:596px;background:#ECE9D8;border-top:1px solid #C8D0E0;border-left:1px solid #C8D0E0"></div>
<div class="a" style="left:41px;top:143px;width:1052px;height:1px;background:#808080"></div><div class="a" style="left:41px;top:143px;width:1px;height:578px;background:#808080"></div>
<svg class="a" style="left:43px;top:120px" width="15" height="15"><rect x="0.5" y="0.5" width="14" height="14" fill="#0A4A8A" stroke="#8AB"/><path d="M7.5 2V13M2 7.5H13" stroke="#fff" stroke-width="1.5"/><circle cx="7.5" cy="7.5" r="2" fill="#fff"/><path d="M3 3H5M10 11H12" stroke="#5CF"/></svg>
<div class="a mono" style="left:61px;top:120px;color:#fff;font-weight:bold;font-size:13.35px;line-height:16px;white-space:nowrap;text-shadow:1px 1px 0 #0A1E6E">C:\Documents and Settings\Administrator\My Documents\360<span style="font-size:14px;letter-spacing:1px">截图</span>\<span style="font-size:13px;letter-spacing:1px">控制机柜图</span>.dwg</div>
<div class="wbtn" style="left:1043px;top:118px"><div class="a" style="left:5px;top:12px;width:7px;height:3px;background:#fff"></div></div><div class="wbtn" style="left:1066px;top:118px"><div class="a" style="left:4px;top:4px;width:11px;height:11px;border:1px solid #fff;border-top-width:3px"></div></div><div class="wbtn cl" style="left:1089px;top:118px"><svg class="a" style="left:3px;top:3px" width="13" height="13"><path d="M2 2L11 11M11 2L2 11" stroke="#fff" stroke-width="2"/></svg></div>
<div class="a" style="left:1093px;top:143px;width:17px;height:578px;background:#FAF9F4;border-left:1px solid #EEEDE5"></div>
<div class="a" style="left:1093px;top:143px;width:17px;height:17px;border:1px solid #fff;border-radius:2px;background:linear-gradient(135deg,#DCE6FB,#B9CBF3)"><svg class="a" style="left:3px;top:3px" width="9" height="9"><path d="M1 6L4.5 2.5L8 6" fill="none" stroke="#4D6185" stroke-width="2"/></svg></div>
<div class="a" style="left:1093px;top:704px;width:17px;height:17px;border:1px solid #fff;border-radius:2px;background:linear-gradient(135deg,#DCE6FB,#B9CBF3)"><svg class="a" style="left:3px;top:3px" width="9" height="9"><path d="M1 3L4.5 6.5L8 3" fill="none" stroke="#4D6185" stroke-width="2"/></svg></div>
<div class="a" style="left:1093px;top:310px;width:17px;height:16px;border:1px solid #fff;border-radius:2px;background:linear-gradient(90deg,#C8D6F8,#B6C8F4)"><svg class="a" style="left:4px;top:4px" width="8" height="7"><path d="M0 0.5H8M0 2.5H8M0 4.5H8M0 6.5H8" stroke="#EEF3FE"/></svg></div>
<div class="a" style="left:40px;top:721px;width:1071px;height:16px;background:#ECE9D8"></div>
<div class="a" style="left:42px;top:722px;width:18px;height:14px;border-right:1px solid #C8C5B5;background:#ECE9D8"></div>
<div class="a" style="left:60px;top:722px;width:18px;height:14px;border-right:1px solid #C8C5B5;background:#ECE9D8"></div>
<div class="a" style="left:78px;top:722px;width:18px;height:14px;border-right:1px solid #C8C5B5;background:#ECE9D8"></div>
<div class="a" style="left:96px;top:722px;width:18px;height:14px;border-right:1px solid #C8C5B5;background:#ECE9D8"></div>
<svg class="a" style="left:42px;top:722px" width="72" height="14"><path d="M5 3V11M12 3L7 7L12 11Z" stroke="#000" fill="#000"/><path d="M30 3L25 7L30 11Z" fill="#000"/><path d="M42 3L47 7L42 11Z" fill="#000"/><path d="M60 3L65 7L60 11Z M67 3V11" stroke="#000" fill="#000"/></svg>
<svg class="a" style="left:112px;top:720px" width="140" height="18"><path d="M90 1L96 16H132L138 1" fill="#ECE9D8" stroke="#000"/><path d="M44 1L50 16H88L94 1" fill="#ECE9D8" stroke="#000"/><path d="M6 1L12 16H44L50 1Z" fill="#000" stroke="#000"/></svg>
<div class="a" style="left:126px;top:721px;font-size:12px;line-height:14px;color:#fff;font-weight:bold">模型</div>
<div class="a" style="left:163px;top:721px;font-size:12px;line-height:14px">布局1</div>
<div class="a" style="left:209px;top:721px;font-size:12px;line-height:14px">布局2</div>
<div class="a" style="left:735px;top:721px;width:358px;height:16px;background:#FAF9F4"></div>
<div class="a" style="left:736px;top:722px;width:4px;height:14px;background:#ECE9D8;border:1px solid #C8C5B5"></div>
<div class="a" style="left:741px;top:721px;width:17px;height:16px;border:1px solid #fff;border-radius:2px;background:linear-gradient(135deg,#DCE6FB,#B9CBF3)"><svg class="a" style="left:3px;top:2px" width="9" height="9"><path d="M6 1L2.5 4.5L6 8" fill="none" stroke="#4D6185" stroke-width="2"/></svg></div>
<div class="a" style="left:1076px;top:721px;width:17px;height:16px;border:1px solid #fff;border-radius:2px;background:linear-gradient(135deg,#DCE6FB,#B9CBF3)"><svg class="a" style="left:3px;top:2px" width="9" height="9"><path d="M3 1L6.5 4.5L3 8" fill="none" stroke="#4D6185" stroke-width="2"/></svg></div>
<div class="a" style="left:969px;top:721px;width:16px;height:16px;border:1px solid #fff;border-radius:2px;background:linear-gradient(#C8D6F8,#B6C8F4)"><svg class="a" style="left:3px;top:4px" width="8" height="8"><path d="M0.5 0V8M2.5 0V8M4.5 0V8M6.5 0V8" stroke="#EEF3FE"/></svg></div>
<div class="a" style="left:42px;top:144px;width:1051px;height:577px;background:#000"></div>
<svg class="a" style="left:42px;top:144px" width="1051" height="577" viewBox="42 144 1051 577" shape-rendering="crispEdges"><path d="M92.5 146L92.5 721" stroke="#fff" stroke-width="1"/><circle cx="92.5" cy="147" r="2.8" fill="#fff" shape-rendering="auto"/><path d="M160.5 146L160.5 162" stroke="#fff" stroke-width="1"/><circle cx="160.5" cy="147" r="2.8" fill="#fff" shape-rendering="auto"/><path d="M208.5 143L208.5 721" stroke="#fff" stroke-width="1"/><path d="M210.5 143L210.5 721" stroke="#fff" stroke-width="1"/><path d="M236.5 143L236.5 721" stroke="#fff" stroke-width="1"/><path d="M269.5 143L269.5 721" stroke="#fff" stroke-width="1"/><path d="M228 143L228 721" stroke="#A8A8A8" stroke-width="2"/><rect x="211.5" y="602.5" width="15" height="61" stroke="#fff" fill="none"/><path d="M211.5 605.5L226.5 605.5" stroke="#fff" stroke-width="1"/><path d="M211.5 611.5L226.5 611.5" stroke="#fff" stroke-width="1"/><path d="M211.5 632.5L226.5 632.5" stroke="#fff" stroke-width="1"/><path d="M211.5 661.5L226.5 661.5" stroke="#fff" stroke-width="1"/><circle cx="219" cy="641" r="4" stroke="#fff" fill="none" shape-rendering="auto"/><text transform="translate(205.5,659.5) rotate(-90)" font-size="10" font-weight="bold" fill="#fff" stroke="#fff" stroke-width="0.4" font-family="Liberation Sans" textLength="51" lengthAdjust="spacingAndGlyphs">DOOR LOCK</text><path d="M573.5 143L573.5 721" stroke="#fff" stroke-width="1"/><path d="M617.5 143L617.5 721" stroke="#fff" stroke-width="1"/><path d="M643.5 143L643.5 721" stroke="#fff" stroke-width="1"/><path d="M645.5 143L645.5 721" stroke="#fff" stroke-width="1"/><path d="M628 143L628 721" stroke="#A8A8A8" stroke-width="2"/><path d="M269.5 173.5L573.5 173.5" stroke="#fff" stroke-width="1"/><path d="M269.5 399.5L573.5 399.5" stroke="#fff" stroke-width="1"/><path d="M269.5 435.5L573.5 435.5" stroke="#fff" stroke-width="1"/><path d="M269.5 570.5L573.5 570.5" stroke="#fff" stroke-width="1"/><path d="M269.5 606.5L573.5 606.5" stroke="#fff" stroke-width="1"/><text x="427" y="157" text-anchor="middle" font-size="8" font-weight="bold" fill="#fff" font-family="Liberation Sans" textLength="112" lengthAdjust="spacingAndGlyphs">60m m X 80m m (WxD) 集线槽</text><text x="427" y="420" text-anchor="middle" font-size="8" font-weight="bold" fill="#fff" font-family="Liberation Sans" textLength="112" lengthAdjust="spacingAndGlyphs">60m m X 80m m (WxD) 集线槽</text><text x="427" y="590" text-anchor="middle" font-size="8" font-weight="bold" fill="#fff" font-family="Liberation Sans" textLength="112" lengthAdjust="spacingAndGlyphs">60m m X 80m m (WxD) 集线槽</text><text transform="translate(256.5,630) rotate(-90)" font-size="9" font-weight="bold" fill="#fff" font-family="Liberation Sans" textLength="111" lengthAdjust="spacingAndGlyphs">60mm X 80mm (WxD) 集线槽</text><text transform="translate(600,634) rotate(-90)" font-size="9" font-weight="bold" fill="#fff" font-family="Liberation Sans" textLength="113" lengthAdjust="spacingAndGlyphs">80mm X 80mm (WxD) 集线槽</text><path d="M231 245.5L287 245.5" stroke="#fff" stroke-width="1"/><path d="M259.5 218L259.5 274" stroke="#fff" stroke-width="1"/><rect x="256.5" y="242.5" width="6" height="6" stroke="#fff" fill="none"/><rect x="53.5" y="696.5" width="11" height="11" stroke="#fff" fill="none"/><path d="M59.5 696L59.5 634" stroke="#fff" stroke-width="1"/><path d="M55.5 646.5L59.5 633L63.5 646.5Z" stroke="#fff" fill="none"/><path d="M57.5 646L59.5 637L61.5 646" stroke="#fff" fill="none"/><path d="M65 701.5L115 701.5" stroke="#fff" stroke-width="1"/><path d="M114.5 697.5L128 701.5L114.5 705.5Z" stroke="#fff" fill="none"/><path d="M115 699.5L124 701.5L115 703.5" stroke="#fff" fill="none"/><path d="M54 610L60 617L66 610M60 617V623" stroke="#fff" fill="none"/><path d="M139.5 697.5L150 710.5M150 697.5L139.5 710.5" stroke="#fff" fill="none"/><g transform="translate(89,686) rotate(-90)" stroke="#fff" stroke-width="1.1" fill="none" shape-rendering="auto"><path d="M1.5 -11L4.5 -14V0"/><path transform="translate(11,0)" d="M9 -9.5A4.5 4.5 0 1 1 0 -9.5A4.5 4.5 0 1 1 9 -9.5V-4Q9 0 4.5 0Q1.5 0 0.5 -2.5"/><path transform="translate(24,0)" d="M8 -14H1L0.5 -8Q2 -9.5 4.5 -9.5Q8.5 -9.5 8.5 -5Q8.5 0 4.5 0Q1.5 0 0 -2"/><ellipse cx="42" cy="-7" rx="5" ry="7"/><path transform="translate(51,0)" d="M0.5 -10V0M0.5 -7Q0.5 -10 4 -10Q7.5 -10 7.5 -7V0M7.5 -7Q7.5 -10 11 -10Q14.5 -10 14.5 -7V0"/><path transform="translate(71,0)" d="M0.5 -10V0M0.5 -7Q0.5 -10 4 -10Q7.5 -10 7.5 -7V0M7.5 -7Q7.5 -10 11 -10Q14.5 -10 14.5 -7V0"/></g><rect x="291.5" y="209.5" width="261.0" height="154.0" stroke="#fff" fill="none"/><path d="M301.5 209.5L301.5 363.5" stroke="#fff" stroke-width="1"/><path d="M328.5 209.5L328.5 363.5" stroke="#fff" stroke-width="1"/><path d="M355.5 209.5L355.5 363.5" stroke="#fff" stroke-width="1"/><path d="M368.5 209.5L368.5 363.5" stroke="#fff" stroke-width="1"/><path d="M381.5 209.5L381.5 363.5" stroke="#fff" stroke-width="1"/><path d="M395.5 209.5L395.5 363.5" stroke="#fff" stroke-width="1"/><path d="M408.5 209.5L408.5 363.5" stroke="#fff" stroke-width="1"/><path d="M422.5 209.5L422.5 363.5" stroke="#fff" stroke-width="1"/><path d="M448.5 209.5L448.5 363.5" stroke="#fff" stroke-width="1"/><path d="M475.5 209.5L475.5 363.5" stroke="#fff" stroke-width="1"/><path d="M488.5 209.5L488.5 363.5" stroke="#fff" stroke-width="1"/><path d="M502.5 209.5L502.5 363.5" stroke="#fff" stroke-width="1"/><path d="M515.5 209.5L515.5 363.5" stroke="#fff" stroke-width="1"/><path d="M529.5 209.5L529.5 363.5" stroke="#fff" stroke-width="1"/><path d="M542.5 209.5L542.5 363.5" stroke="#fff" stroke-width="1"/><path d="M291.5 222.5L301.5 222.5" stroke="#fff" stroke-width="1"/><path d="M291.5 234.5L301.5 234.5" stroke="#fff" stroke-width="1"/><path d="M291.5 238.5H299.5L301.5 236.5" stroke="#fff" fill="none"/><path d="M291.5 245.5L301.5 245.5" stroke="#30D030" stroke-width="2"/><path d="M291.5 249.5L301.5 249.5" stroke="#fff" stroke-width="1"/><path d="M291.5 330.5L301.5 330.5" stroke="#fff" stroke-width="1"/><path d="M291.5 336.5H299.5L301.5 338.5" stroke="#fff" fill="none"/><path d="M291.5 340.5L301.5 340.5" stroke="#fff" stroke-width="1"/><path d="M542.5 222.5L552.5 222.5" stroke="#fff" stroke-width="1"/><path d="M542.5 234.5L552.5 234.5" stroke="#fff" stroke-width="1"/><path d="M542.5 238.5H550.5L552.5 236.5" stroke="#fff" fill="none"/><path d="M542.5 245.5L552.5 245.5" stroke="#30D030" stroke-width="2"/><path d="M542.5 249.5L552.5 249.5" stroke="#fff" stroke-width="1"/><path d="M542.5 330.5L552.5 330.5" stroke="#fff" stroke-width="1"/><path d="M542.5 336.5H550.5L552.5 338.5" stroke="#fff" fill="none"/><path d="M542.5 340.5L552.5 340.5" stroke="#fff" stroke-width="1"/><rect x="293.5" y="263.5" width="6" height="35" stroke="#fff" fill="none"/><path d="M294.5 270H298.5V274H294.5Z" fill="#fff"/><path d="M294.5 292H298.5V296H294.5Z" fill="#fff"/><rect x="294" y="306" width="3" height="3" fill="#fff"/><rect x="294" y="316" width="3" height="3" fill="#fff"/><rect x="294" y="324" width="3" height="3" fill="#fff"/><circle cx="296.5" cy="356" r="3.5" stroke="#fff" fill="none"/><path d="M298 350L301 347" stroke="#fff"/><rect x="544.5" y="253.5" width="6" height="33" stroke="#fff" fill="none"/><rect x="545" y="306" width="4" height="4" fill="#fff"/><rect x="546" y="316" width="2" height="2" fill="#fff"/><path d="M301.5 287.5L328.5 287.5" stroke="#fff" stroke-width="1"/><path d="M306.0 223.5H310.0V258.5H306.0ZM306.0 226.5H310.0M306.0 229.5H310.0M306.0 232.5H310.0M306.0 235.5H310.0M306.0 238.5H310.0M306.0 241.5H310.0M306.0 244.5H310.0M306.0 247.5H310.0M306.0 250.5H310.0M306.0 253.5H310.0M306.0 256.5H310.0" stroke="#fff" fill="none"/><rect x="306.0" y="263.5" width="5" height="6" stroke="#fff" fill="none"/><rect x="306.0" y="273.5" width="5" height="7" stroke="#fff" fill="none"/><rect x="307.5" y="266" width="2" height="2" fill="#fff"/><rect x="306.5" y="276" width="4" height="4" fill="#fff"/><path d="M422.5 287.5L448.5 287.5" stroke="#fff" stroke-width="1"/><path d="M427.0 223.5H431.0V258.5H427.0ZM427.0 226.5H431.0M427.0 229.5H431.0M427.0 232.5H431.0M427.0 235.5H431.0M427.0 238.5H431.0M427.0 241.5H431.0M427.0 244.5H431.0M427.0 247.5H431.0M427.0 250.5H431.0M427.0 253.5H431.0M427.0 256.5H431.0" stroke="#fff" fill="none"/><rect x="427.0" y="263.5" width="5" height="6" stroke="#fff" fill="none"/><rect x="427.0" y="273.5" width="5" height="7" stroke="#fff" fill="none"/><rect x="428.5" y="266" width="2" height="2" fill="#fff"/><rect x="427.5" y="276" width="4" height="4" fill="#fff"/><path d="M341.0 277.5L355.5 277.5" stroke="#fff" stroke-width="1"/><path d="M341.0 277.5L341.0 313.5" stroke="#fff" stroke-width="1"/><path d="M328.5 313.5L341.0 313.5" stroke="#fff" stroke-width="1"/><rect x="335.0" y="278.5" width="5" height="31" stroke="#fff" fill="none"/><path d="M335.0 223L335.0 255" stroke="#fff" stroke-width="2"/><path d="M347.0 223.5H350.0V255.5H347.0ZM347.0 226.5H350.0M347.0 229.5H350.0M347.0 232.5H350.0M347.0 235.5H350.0M347.0 238.5H350.0M347.0 241.5H350.0M347.0 244.5H350.0M347.0 247.5H350.0M347.0 250.5H350.0M347.0 253.5H350.0" stroke="#fff" fill="none"/><rect x="335.0" y="257.5" width="3" height="5" stroke="#fff" fill="none"/><path d="M332.5 272L340.5 265" stroke="#fff" stroke-width="2"/><circle cx="336.5" cy="268" r="2.5" fill="#fff"/><path d="M463.0 277.5L475.5 277.5" stroke="#fff" stroke-width="1"/><path d="M463.0 277.5L463.0 313.5" stroke="#fff" stroke-width="1"/><path d="M448.5 313.5L463.0 313.5" stroke="#fff" stroke-width="1"/><rect x="455.0" y="278.5" width="5" height="31" stroke="#fff" fill="none"/><path d="M454.0 223.5H457.0V255.5H454.0ZM454.0 226.5H457.0M454.0 229.5H457.0M454.0 232.5H457.0M454.0 235.5H457.0M454.0 238.5H457.0M454.0 241.5H457.0M454.0 244.5H457.0M454.0 247.5H457.0M454.0 250.5H457.0M454.0 253.5H457.0" stroke="#fff" fill="none"/><path d="M469.0 223L469.0 255" stroke="#fff" stroke-width="2"/><rect x="455.0" y="257.5" width="3" height="5" stroke="#fff" fill="none"/><path d="M452.5 272L460.5 265" stroke="#fff" stroke-width="2"/><circle cx="456.5" cy="268" r="2.5" fill="#fff"/><path d="M359.0 223.5H362.0V240.5H359.0ZM359.0 226.5H362.0M359.0 229.5H362.0M359.0 232.5H362.0M359.0 235.5H362.0M359.0 238.5H362.0" stroke="#fff" fill="none"/><path d="M479.0 223.5H482.0V240.5H479.0ZM479.0 226.5H482.0M479.0 229.5H482.0M479.0 232.5H482.0M479.0 235.5H482.0M479.0 238.5H482.0" stroke="#fff" fill="none"/><rect x="368.5" y="215" width="54.0" height="6" fill="#fff"/><rect x="368.5" y="352.5" width="54.0" height="5.5" fill="#fff"/><rect x="488.5" y="215" width="54.0" height="6" fill="#fff"/><rect x="488.5" y="352.5" width="54.0" height="5.5" fill="#fff"/><circle cx="375.0" cy="212" r="2.2" stroke="#fff" stroke-width="1.5" fill="none" shape-rendering="auto"/><path d="M375.0 214V215" stroke="#fff"/><circle cx="375.0" cy="361" r="2.2" stroke="#fff" stroke-width="1.5" fill="none" shape-rendering="auto"/><path d="M375.0 358V359" stroke="#fff"/><rect x="370.5" y="217" width="3" height="1.4" fill="#000"/><rect x="370.5" y="355" width="3" height="1.4" fill="#000"/><rect x="374.1" y="217" width="3" height="1.4" fill="#000"/><rect x="374.1" y="355" width="3" height="1.4" fill="#000"/><rect x="377.7" y="217" width="3" height="1.4" fill="#000"/><rect x="377.7" y="355" width="3" height="1.4" fill="#000"/><circle cx="388.0" cy="212" r="2.2" stroke="#fff" stroke-width="1.5" fill="none" shape-rendering="auto"/><path d="M388.0 214V215" stroke="#fff"/><circle cx="388.0" cy="361" r="2.2" stroke="#fff" stroke-width="1.5" fill="none" shape-rendering="auto"/><path d="M388.0 358V359" stroke="#fff"/><rect x="383.5" y="217" width="3" height="1.4" fill="#000"/><rect x="383.5" y="355" width="3" height="1.4" fill="#000"/><rect x="387.1" y="217" width="3" height="1.4" fill="#000"/><rect x="387.1" y="355" width="3" height="1.4" fill="#000"/><rect x="390.7" y="217" width="3" height="1.4" fill="#000"/><rect x="390.7" y="355" width="3" height="1.4" fill="#000"/><circle cx="402.0" cy="212" r="2.2" stroke="#fff" stroke-width="1.5" fill="none" shape-rendering="auto"/><path d="M402.0 214V215" stroke="#fff"/><circle cx="402.0" cy="361" r="2.2" stroke="#fff" stroke-width="1.5" fill="none" shape-rendering="auto"/><path d="M402.0 358V359" stroke="#fff"/><rect x="397.5" y="217" width="3" height="1.4" fill="#000"/><rect x="397.5" y="355" width="3" height="1.4" fill="#000"/><rect x="401.1" y="217" width="3" height="1.4" fill="#000"/><rect x="401.1" y="355" width="3" height="1.4" fill="#000"/><rect x="404.7" y="217" width="3" height="1.4" fill="#000"/><rect x="404.7" y="355" width="3" height="1.4" fill="#000"/><circle cx="415.0" cy="212" r="2.2" stroke="#fff" stroke-width="1.5" fill="none" shape-rendering="auto"/><path d="M415.0 214V215" stroke="#fff"/><circle cx="415.0" cy="361" r="2.2" stroke="#fff" stroke-width="1.5" fill="none" shape-rendering="auto"/><path d="M415.0 358V359" stroke="#fff"/><rect x="410.5" y="217" width="3" height="1.4" fill="#000"/><rect x="410.5" y="355" width="3" height="1.4" fill="#000"/><rect x="414.1" y="217" width="3" height="1.4" fill="#000"/><rect x="414.1" y="355" width="3" height="1.4" fill="#000"/><rect x="417.7" y="217" width="3" height="1.4" fill="#000"/><rect x="417.7" y="355" width="3" height="1.4" fill="#000"/><circle cx="495.0" cy="212" r="2.2" stroke="#fff" stroke-width="1.5" fill="none" shape-rendering="auto"/><path d="M495.0 214V215" stroke="#fff"/><circle cx="495.0" cy="361" r="2.2" stroke="#fff" stroke-width="1.5" fill="none" shape-rendering="auto"/><path d="M495.0 358V359" stroke="#fff"/><rect x="490.5" y="217" width="3" height="1.4" fill="#000"/><rect x="490.5" y="355" width="3" height="1.4" fill="#000"/><rect x="494.1" y="217" width="3" height="1.4" fill="#000"/><rect x="494.1" y="355" width="3" height="1.4" fill="#000"/><rect x="497.7" y="217" width="3" height="1.4" fill="#000"/><rect x="497.7" y="355" width="3" height="1.4" fill="#000"/><circle cx="509.0" cy="212" r="2.2" stroke="#fff" stroke-width="1.5" fill="none" shape-rendering="auto"/><path d="M509.0 214V215" stroke="#fff"/><circle cx="509.0" cy="361" r="2.2" stroke="#fff" stroke-width="1.5" fill="none" shape-rendering="auto"/><path d="M509.0 358V359" stroke="#fff"/><rect x="504.5" y="217" width="3" height="1.4" fill="#000"/><rect x="504.5" y="355" width="3" height="1.4" fill="#000"/><rect x="508.1" y="217" width="3" height="1.4" fill="#000"/><rect x="508.1" y="355" width="3" height="1.4" fill="#000"/><rect x="511.7" y="217" width="3" height="1.4" fill="#000"/><rect x="511.7" y="355" width="3" height="1.4" fill="#000"/><circle cx="522.0" cy="212" r="2.2" stroke="#fff" stroke-width="1.5" fill="none" shape-rendering="auto"/><path d="M522.0 214V215" stroke="#fff"/><circle cx="522.0" cy="361" r="2.2" stroke="#fff" stroke-width="1.5" fill="none" shape-rendering="auto"/><path d="M522.0 358V359" stroke="#fff"/><rect x="517.5" y="217" width="3" height="1.4" fill="#000"/><rect x="517.5" y="355" width="3" height="1.4" fill="#000"/><rect x="521.1" y="217" width="3" height="1.4" fill="#000"/><rect x="521.1" y="355" width="3" height="1.4" fill="#000"/><rect x="524.7" y="217" width="3" height="1.4" fill="#000"/><rect x="524.7" y="355" width="3" height="1.4" fill="#000"/><circle cx="536.0" cy="212" r="2.2" stroke="#fff" stroke-width="1.5" fill="none" shape-rendering="auto"/><path d="M536.0 214V215" stroke="#fff"/><circle cx="536.0" cy="361" r="2.2" stroke="#fff" stroke-width="1.5" fill="none" shape-rendering="auto"/><path d="M536.0 358V359" stroke="#fff"/><rect x="531.5" y="217" width="3" height="1.4" fill="#000"/><rect x="531.5" y="355" width="3" height="1.4" fill="#000"/><rect x="535.1" y="217" width="3" height="1.4" fill="#000"/><rect x="535.1" y="355" width="3" height="1.4" fill="#000"/><rect x="538.7" y="217" width="3" height="1.4" fill="#000"/><rect x="538.7" y="355" width="3" height="1.4" fill="#000"/><path d="M563 281.5L620 280L695 276.5" stroke="#C00000" fill="none"/><path d="M573 498.5L660 495.5L708 492.5L722 491" stroke="#C00000" fill="none"/><rect x="707.5" y="277.5" width="30" height="60" fill="#fff"/><text x="708" y="288" font-size="11" fill="#C00000" font-family="Liberation Mono" textLength="24" lengthAdjust="spacingAndGlyphs">PCS7</text><text x="708" y="300.5" font-size="11.5" fill="#C00000" font-family="Liberation Sans">系统</text><text x="708" y="312.2" font-size="11.5" fill="#C00000" font-family="Liberation Sans">热备</text><text x="708" y="323.9" font-size="11.5" fill="#C00000" font-family="Liberation Sans">机架</text><rect x="722" y="483" width="108" height="34" fill="#fff"/><text x="722" y="493" font-size="11" fill="#C00000" font-family="Liberation Mono" textLength="53" lengthAdjust="spacingAndGlyphs">ET200 I/O</text><path d="M926.5 143V166.5H951.5V143M935.5 143V146.5H926.5M926.5 157.5H935.5V166.5" stroke="#fff" fill="none"/><path d="M931.5 166L931.5 721" stroke="#fff" stroke-width="1"/><path d="M937.5 166L937.5 721" stroke="#fff" stroke-width="1"/><path d="M949.5 166L949.5 721" stroke="#fff" stroke-width="1"/><path d="M931.5 175.5L1093 175.5" stroke="#fff" stroke-width="1"/><clipPath id="hc0"><rect x="1065" y="211.0" width="28" height="156.5"/></clipPath><g clip-path="url(#hc0)"><path d="M907.0 367.5L1064.0 210.5M911.0 367.5L1068.0 210.5M915.0 367.5L1072.0 210.5M919.0 367.5L1076.0 210.5M923.0 367.5L1080.0 210.5M927.0 367.5L1084.0 210.5M931.0 367.5L1088.0 210.5M935.0 367.5L1092.0 210.5M939.0 367.5L1096.0 210.5M943.0 367.5L1100.0 210.5M947.0 367.5L1104.0 210.5M951.0 367.5L1108.0 210.5M955.0 367.5L1112.0 210.5M959.0 367.5L1116.0 210.5M963.0 367.5L1120.0 210.5M967.0 367.5L1124.0 210.5M971.0 367.5L1128.0 210.5M975.0 367.5L1132.0 210.5M979.0 367.5L1136.0 210.5M983.0 367.5L1140.0 210.5M987.0 367.5L1144.0 210.5M991.0 367.5L1148.0 210.5M995.0 367.5L1152.0 210.5M999.0 367.5L1156.0 210.5M1003.0 367.5L1160.0 210.5M1007.0 367.5L1164.0 210.5M1011.0 367.5L1168.0 210.5M1015.0 367.5L1172.0 210.5M1019.0 367.5L1176.0 210.5M1023.0 367.5L1180.0 210.5M1027.0 367.5L1184.0 210.5M1031.0 367.5L1188.0 210.5M1035.0 367.5L1192.0 210.5M1039.0 367.5L1196.0 210.5M1043.0 367.5L1200.0 210.5M1047.0 367.5L1204.0 210.5M1051.0 367.5L1208.0 210.5M1055.0 367.5L1212.0 210.5M1059.0 367.5L1216.0 210.5M1063.0 367.5L1220.0 210.5M1067.0 367.5L1224.0 210.5M1071.0 367.5L1228.0 210.5M1075.0 367.5L1232.0 210.5M1079.0 367.5L1236.0 210.5M1083.0 367.5L1240.0 210.5M1087.0 367.5L1244.0 210.5M1091.0 367.5L1248.0 210.5" stroke="#fff" stroke-width="1" shape-rendering="auto"/></g><rect x="1064.5" y="210.5" width="30" height="157.0" fill="none" stroke="#fff"/><clipPath id="hc1"><rect x="1065" y="458.0" width="28" height="69.5"/></clipPath><g clip-path="url(#hc1)"><path d="M994.0 527.5L1064.0 457.5M998.0 527.5L1068.0 457.5M1002.0 527.5L1072.0 457.5M1006.0 527.5L1076.0 457.5M1010.0 527.5L1080.0 457.5M1014.0 527.5L1084.0 457.5M1018.0 527.5L1088.0 457.5M1022.0 527.5L1092.0 457.5M1026.0 527.5L1096.0 457.5M1030.0 527.5L1100.0 457.5M1034.0 527.5L1104.0 457.5M1038.0 527.5L1108.0 457.5M1042.0 527.5L1112.0 457.5M1046.0 527.5L1116.0 457.5M1050.0 527.5L1120.0 457.5M1054.0 527.5L1124.0 457.5M1058.0 527.5L1128.0 457.5M1062.0 527.5L1132.0 457.5M1066.0 527.5L1136.0 457.5M1070.0 527.5L1140.0 457.5M1074.0 527.5L1144.0 457.5M1078.0 527.5L1148.0 457.5M1082.0 527.5L1152.0 457.5M1086.0 527.5L1156.0 457.5M1090.0 527.5L1160.0 457.5" stroke="#fff" stroke-width="1" shape-rendering="auto"/></g><rect x="1064.5" y="457.5" width="30" height="70.0" fill="none" stroke="#fff"/><clipPath id="hc2"><rect x="1065" y="658.0" width="28" height="63.0"/></clipPath><g clip-path="url(#hc2)"><path d="M1000.5 721L1064.0 657.5M1004.5 721L1068.0 657.5M1008.5 721L1072.0 657.5M1012.5 721L1076.0 657.5M1016.5 721L1080.0 657.5M1020.5 721L1084.0 657.5M1024.5 721L1088.0 657.5M1028.5 721L1092.0 657.5M1032.5 721L1096.0 657.5M1036.5 721L1100.0 657.5M1040.5 721L1104.0 657.5M1044.5 721L1108.0 657.5M1048.5 721L1112.0 657.5M1052.5 721L1116.0 657.5M1056.5 721L1120.0 657.5M1060.5 721L1124.0 657.5M1064.5 721L1128.0 657.5M1068.5 721L1132.0 657.5M1072.5 721L1136.0 657.5M1076.5 721L1140.0 657.5M1080.5 721L1144.0 657.5M1084.5 721L1148.0 657.5M1088.5 721L1152.0 657.5M1092.5 721L1156.0 657.5" stroke="#fff" stroke-width="1" shape-rendering="auto"/></g><rect x="1064.5" y="657.5" width="30" height="63.5" fill="none" stroke="#fff"/><defs><pattern id="term" patternUnits="userSpaceOnUse" x="0" y="0" width="4" height="4"><rect x="0" y="0" width="3" height="3" fill="#1E9A9A"/><rect x="1" y="1" width="1" height="1" fill="#000"/></pattern></defs><rect x="282.5" y="468.5" width="279.0" height="71.0" stroke="#2A8C8C" fill="none"/><path d="M282.5 471.5L297.5 471.5" stroke="#2A8C8C" stroke-width="1"/><path d="M282.5 536.5L297.5 536.5" stroke="#2A8C8C" stroke-width="1"/><path d="M294.5 471.5L294.5 536.5" stroke="#2A8C8C" stroke-width="1"/><circle cx="287.0" cy="479.5" r="2.5" stroke="#2A8C8C" fill="none" shape-rendering="auto"/><circle cx="287.0" cy="528.5" r="2.5" stroke="#2A8C8C" fill="none" shape-rendering="auto"/><path d="M297.5 468.5L297.5 539.5" stroke="#2A8C8C" stroke-width="1"/><path d="M320.5 468.5L320.5 539.5" stroke="#2A8C8C" stroke-width="1"/><path d="M343.5 468.5L343.5 539.5" stroke="#2A8C8C" stroke-width="1"/><path d="M297.5 506.5L343.5 506.5" stroke="#2A8C8C" stroke-width="1"/><g transform="translate(313.5,501.0) rotate(-90)" stroke="#fff" stroke-width="1.1" fill="none" shape-rendering="auto"><path d="M0.5 -12V0M5.5 0V-12L9.5 -1.5L13.5 -12V0M17 -10L19.5 -12V0"/></g><rect x="302.0" y="532.0" width="3" height="3" stroke="#2A8C8C" fill="none"/><g transform="translate(336.5,501.0) rotate(-90)" stroke="#fff" stroke-width="1.1" fill="none" shape-rendering="auto"><path d="M0.5 -12V0M5.5 0V-12L9.5 -1.5L13.5 -12V0M17 -9Q17 -12 20.5 -12Q24 -12 24 -8.6L17 0H25"/></g><rect x="325.0" y="532.0" width="3" height="3" stroke="#2A8C8C" fill="none"/><path d="M366.5 468.5L366.5 539.5" stroke="#2A8C8C" stroke-width="1"/><path d="M345.5 473.5h2v2h-2zM345.5 477.5h2v2h-2zM345.5 481.5h2v2h-2zM345.5 485.5h2v2h-2zM345.5 489.5h2v2h-2zM345.5 493.5h2v2h-2zM345.5 497.5h2v2h-2zM345.5 501.5h2v2h-2zM345.5 505.5h2v2h-2zM345.5 509.5h2v2h-2zM345.5 513.5h2v2h-2zM345.5 517.5h2v2h-2zM345.5 521.5h2v2h-2zM345.5 525.5h2v2h-2zM345.5 529.5h2v2h-2z" stroke="#1E9A9A" fill="none"/><path d="M362.5 473.5h2v2h-2zM362.5 477.5h2v2h-2zM362.5 481.5h2v2h-2zM362.5 485.5h2v2h-2zM362.5 489.5h2v2h-2zM362.5 493.5h2v2h-2zM362.5 497.5h2v2h-2zM362.5 501.5h2v2h-2zM362.5 505.5h2v2h-2zM362.5 509.5h2v2h-2zM362.5 513.5h2v2h-2zM362.5 517.5h2v2h-2zM362.5 521.5h2v2h-2zM362.5 525.5h2v2h-2zM362.5 529.5h2v2h-2z" stroke="#1E9A9A" fill="none"/><rect x="348.5" y="474.0" width="12" height="60.0" stroke="#2A8C8C" fill="none"/><path d="M349 501.5H359" stroke="#fff" stroke-width="1"/><path d="M349.5 511.5V507.0L351.5 504.5H356.5L358.5 507.0V511.5Z" stroke="#fff" stroke-width="1" fill="none"/><path d="M389.5 468.5L389.5 539.5" stroke="#2A8C8C" stroke-width="1"/><path d="M368.5 473.5h2v2h-2zM368.5 477.5h2v2h-2zM368.5 481.5h2v2h-2zM368.5 485.5h2v2h-2zM368.5 489.5h2v2h-2zM368.5 493.5h2v2h-2zM368.5 497.5h2v2h-2zM368.5 501.5h2v2h-2zM368.5 505.5h2v2h-2zM368.5 509.5h2v2h-2zM368.5 513.5h2v2h-2zM368.5 517.5h2v2h-2zM368.5 521.5h2v2h-2zM368.5 525.5h2v2h-2zM368.5 529.5h2v2h-2z" stroke="#1E9A9A" fill="none"/><path d="M385.5 473.5h2v2h-2zM385.5 477.5h2v2h-2zM385.5 481.5h2v2h-2zM385.5 485.5h2v2h-2zM385.5 489.5h2v2h-2zM385.5 493.5h2v2h-2zM385.5 497.5h2v2h-2zM385.5 501.5h2v2h-2zM385.5 505.5h2v2h-2zM385.5 509.5h2v2h-2zM385.5 513.5h2v2h-2zM385.5 517.5h2v2h-2zM385.5 521.5h2v2h-2zM385.5 525.5h2v2h-2zM385.5 529.5h2v2h-2z" stroke="#1E9A9A" fill="none"/><rect x="371.5" y="474.0" width="12" height="60.0" stroke="#2A8C8C" fill="none"/><path d="M372 501.5H382" stroke="#fff" stroke-width="1"/><path d="M372.5 511.5V507.0L374.5 504.5H379.5L381.5 507.0V511.5Z" stroke="#fff" stroke-width="1" fill="none"/><path d="M412.5 468.5L412.5 539.5" stroke="#2A8C8C" stroke-width="1"/><path d="M391.5 473.5h2v2h-2zM391.5 477.5h2v2h-2zM391.5 481.5h2v2h-2zM391.5 485.5h2v2h-2zM391.5 489.5h2v2h-2zM391.5 493.5h2v2h-2zM391.5 497.5h2v2h-2zM391.5 501.5h2v2h-2zM391.5 505.5h2v2h-2zM391.5 509.5h2v2h-2zM391.5 513.5h2v2h-2zM391.5 517.5h2v2h-2zM391.5 521.5h2v2h-2zM391.5 525.5h2v2h-2zM391.5 529.5h2v2h-2z" stroke="#1E9A9A" fill="none"/><path d="M408.5 473.5h2v2h-2zM408.5 477.5h2v2h-2zM408.5 481.5h2v2h-2zM408.5 485.5h2v2h-2zM408.5 489.5h2v2h-2zM408.5 493.5h2v2h-2zM408.5 497.5h2v2h-2zM408.5 501.5h2v2h-2zM408.5 505.5h2v2h-2zM408.5 509.5h2v2h-2zM408.5 513.5h2v2h-2zM408.5 517.5h2v2h-2zM408.5 521.5h2v2h-2zM408.5 525.5h2v2h-2zM408.5 529.5h2v2h-2z" stroke="#1E9A9A" fill="none"/><rect x="394.5" y="474.0" width="12" height="60.0" stroke="#2A8C8C" fill="none"/><path d="M395 501.5H405" stroke="#fff" stroke-width="1"/><path d="M395.5 511.5V507.0L397.5 504.5H402.5L404.5 507.0V511.5Z" stroke="#fff" stroke-width="1" fill="none"/><path d="M435.5 468.5L435.5 539.5" stroke="#2A8C8C" stroke-width="1"/><path d="M414.5 473.5h2v2h-2zM414.5 477.5h2v2h-2zM414.5 481.5h2v2h-2zM414.5 485.5h2v2h-2zM414.5 489.5h2v2h-2zM414.5 493.5h2v2h-2zM414.5 497.5h2v2h-2zM414.5 501.5h2v2h-2zM414.5 505.5h2v2h-2zM414.5 509.5h2v2h-2zM414.5 513.5h2v2h-2zM414.5 517.5h2v2h-2zM414.5 521.5h2v2h-2zM414.5 525.5h2v2h-2zM414.5 529.5h2v2h-2z" stroke="#1E9A9A" fill="none"/><path d="M431.5 473.5h2v2h-2zM431.5 477.5h2v2h-2zM431.5 481.5h2v2h-2zM431.5 485.5h2v2h-2zM431.5 489.5h2v2h-2zM431.5 493.5h2v2h-2zM431.5 497.5h2v2h-2zM431.5 501.5h2v2h-2zM431.5 505.5h2v2h-2zM431.5 509.5h2v2h-2zM431.5 513.5h2v2h-2zM431.5 517.5h2v2h-2zM431.5 521.5h2v2h-2zM431.5 525.5h2v2h-2zM431.5 529.5h2v2h-2z" stroke="#1E9A9A" fill="none"/><rect x="417.5" y="474.0" width="12" height="60.0" stroke="#2A8C8C" fill="none"/><path d="M418 501.5H428" stroke="#fff" stroke-width="1"/><path d="M418.5 511.5V507.0L420.5 504.5H425.5L427.5 507.0V511.5Z" stroke="#fff" stroke-width="1" fill="none"/><path d="M458.5 468.5L458.5 539.5" stroke="#2A8C8C" stroke-width="1"/><path d="M437.5 473.5h2v2h-2zM437.5 477.5h2v2h-2zM437.5 481.5h2v2h-2zM437.5 485.5h2v2h-2zM437.5 489.5h2v2h-2zM437.5 493.5h2v2h-2zM437.5 497.5h2v2h-2zM437.5 501.5h2v2h-2zM437.5 505.5h2v2h-2zM437.5 509.5h2v2h-2zM437.5 513.5h2v2h-2zM437.5 517.5h2v2h-2zM437.5 521.5h2v2h-2zM437.5 525.5h2v2h-2zM437.5 529.5h2v2h-2z" stroke="#1E9A9A" fill="none"/><path d="M454.5 473.5h2v2h-2zM454.5 477.5h2v2h-2zM454.5 481.5h2v2h-2zM454.5 485.5h2v2h-2zM454.5 489.5h2v2h-2zM454.5 493.5h2v2h-2zM454.5 497.5h2v2h-2zM454.5 501.5h2v2h-2zM454.5 505.5h2v2h-2zM454.5 509.5h2v2h-2zM454.5 513.5h2v2h-2zM454.5 517.5h2v2h-2zM454.5 521.5h2v2h-2zM454.5 525.5h2v2h-2zM454.5 529.5h2v2h-2z" stroke="#1E9A9A" fill="none"/><rect x="440.5" y="474.0" width="12" height="60.0" stroke="#2A8C8C" fill="none"/><path d="M441 501.5H451" stroke="#fff" stroke-width="1"/><path d="M441.5 511.5V507.0L443.5 504.5H448.5L450.5 507.0V511.5Z" stroke="#fff" stroke-width="1" fill="none"/><path d="M481.5 468.5L481.5 539.5" stroke="#2A8C8C" stroke-width="1"/><path d="M460.5 473.5h2v2h-2zM460.5 477.5h2v2h-2zM460.5 481.5h2v2h-2zM460.5 485.5h2v2h-2zM460.5 489.5h2v2h-2zM460.5 493.5h2v2h-2zM460.5 497.5h2v2h-2zM460.5 501.5h2v2h-2zM460.5 505.5h2v2h-2zM460.5 509.5h2v2h-2zM460.5 513.5h2v2h-2zM460.5 517.5h2v2h-2zM460.5 521.5h2v2h-2zM460.5 525.5h2v2h-2zM460.5 529.5h2v2h-2z" stroke="#1E9A9A" fill="none"/><path d="M477.5 473.5h2v2h-2zM477.5 477.5h2v2h-2zM477.5 481.5h2v2h-2zM477.5 485.5h2v2h-2zM477.5 489.5h2v2h-2zM477.5 493.5h2v2h-2zM477.5 497.5h2v2h-2zM477.5 501.5h2v2h-2zM477.5 505.5h2v2h-2zM477.5 509.5h2v2h-2zM477.5 513.5h2v2h-2zM477.5 517.5h2v2h-2zM477.5 521.5h2v2h-2zM477.5 525.5h2v2h-2zM477.5 529.5h2v2h-2z" stroke="#1E9A9A" fill="none"/><rect x="463.5" y="474.0" width="12" height="60.0" stroke="#2A8C8C" fill="none"/><path d="M464 501.5H474" stroke="#fff" stroke-width="1"/><path d="M464.5 511.5V507.0L466.5 504.5H471.5L473.5 507.0V511.5Z" stroke="#fff" stroke-width="1" fill="none"/><path d="M504.5 468.5L504.5 539.5" stroke="#2A8C8C" stroke-width="1"/><path d="M483.5 473.5h2v2h-2zM483.5 477.5h2v2h-2zM483.5 481.5h2v2h-2zM483.5 485.5h2v2h-2zM483.5 489.5h2v2h-2zM483.5 493.5h2v2h-2zM483.5 497.5h2v2h-2zM483.5 501.5h2v2h-2zM483.5 505.5h2v2h-2zM483.5 509.5h2v2h-2zM483.5 513.5h2v2h-2zM483.5 517.5h2v2h-2zM483.5 521.5h2v2h-2zM483.5 525.5h2v2h-2zM483.5 529.5h2v2h-2z" stroke="#1E9A9A" fill="none"/><path d="M500.5 473.5h2v2h-2zM500.5 477.5h2v2h-2zM500.5 481.5h2v2h-2zM500.5 485.5h2v2h-2zM500.5 489.5h2v2h-2zM500.5 493.5h2v2h-2zM500.5 497.5h2v2h-2zM500.5 501.5h2v2h-2zM500.5 505.5h2v2h-2zM500.5 509.5h2v2h-2zM500.5 513.5h2v2h-2zM500.5 517.5h2v2h-2zM500.5 521.5h2v2h-2zM500.5 525.5h2v2h-2zM500.5 529.5h2v2h-2z" stroke="#1E9A9A" fill="none"/><rect x="486.5" y="474.0" width="12" height="60.0" stroke="#2A8C8C" fill="none"/><path d="M487 501.5H497" stroke="#fff" stroke-width="1"/><path d="M487.5 511.5V507.0L489.5 504.5H494.5L496.5 507.0V511.5Z" stroke="#fff" stroke-width="1" fill="none"/><path d="M527.5 468.5L527.5 539.5" stroke="#2A8C8C" stroke-width="1"/><path d="M506.5 473.5h2v2h-2zM506.5 477.5h2v2h-2zM506.5 481.5h2v2h-2zM506.5 485.5h2v2h-2zM506.5 489.5h2v2h-2zM506.5 493.5h2v2h-2zM506.5 497.5h2v2h-2zM506.5 501.5h2v2h-2zM506.5 505.5h2v2h-2zM506.5 509.5h2v2h-2zM506.5 513.5h2v2h-2zM506.5 517.5h2v2h-2zM506.5 521.5h2v2h-2zM506.5 525.5h2v2h-2zM506.5 529.5h2v2h-2z" stroke="#1E9A9A" fill="none"/><path d="M523.5 473.5h2v2h-2zM523.5 477.5h2v2h-2zM523.5 481.5h2v2h-2zM523.5 485.5h2v2h-2zM523.5 489.5h2v2h-2zM523.5 493.5h2v2h-2zM523.5 497.5h2v2h-2zM523.5 501.5h2v2h-2zM523.5 505.5h2v2h-2zM523.5 509.5h2v2h-2zM523.5 513.5h2v2h-2zM523.5 517.5h2v2h-2zM523.5 521.5h2v2h-2zM523.5 525.5h2v2h-2zM523.5 529.5h2v2h-2z" stroke="#1E9A9A" fill="none"/><rect x="509.5" y="474.0" width="12" height="60.0" stroke="#2A8C8C" fill="none"/><path d="M510 501.5H520" stroke="#fff" stroke-width="1"/><path d="M510.5 511.5V507.0L512.5 504.5H517.5L519.5 507.0V511.5Z" stroke="#fff" stroke-width="1" fill="none"/><path d="M528.5 468.5L528.5 539.5" stroke="#2A8C8C" stroke-width="1"/><path d="M528.5 471.5L561.5 471.5" stroke="#2A8C8C" stroke-width="1"/><path d="M528.5 536.5L561.5 536.5" stroke="#2A8C8C" stroke-width="1"/><circle cx="554" cy="480" r="2.5" stroke="#2A8C8C" fill="none" shape-rendering="auto"/><circle cx="554" cy="529" r="2.5" stroke="#2A8C8C" fill="none" shape-rendering="auto"/><rect x="281.5" y="637.5" width="245.5" height="71.0" stroke="#2A8C8C" fill="none"/><path d="M281.5 640.5L296.5 640.5" stroke="#2A8C8C" stroke-width="1"/><path d="M281.5 705.5L296.5 705.5" stroke="#2A8C8C" stroke-width="1"/><path d="M293.5 640.5L293.5 705.5" stroke="#2A8C8C" stroke-width="1"/><circle cx="286.0" cy="648.5" r="2.5" stroke="#2A8C8C" fill="none" shape-rendering="auto"/><circle cx="286.0" cy="697.5" r="2.5" stroke="#2A8C8C" fill="none" shape-rendering="auto"/><path d="M296.5 637.5L296.5 708.5" stroke="#2A8C8C" stroke-width="1"/><path d="M319.5 637.5L319.5 708.5" stroke="#2A8C8C" stroke-width="1"/><path d="M342.5 637.5L342.5 708.5" stroke="#2A8C8C" stroke-width="1"/><path d="M296.5 674.5L342.5 674.5" stroke="#2A8C8C" stroke-width="1"/><g transform="translate(312.5,670.0) rotate(-90)" stroke="#fff" stroke-width="1.1" fill="none" shape-rendering="auto"><path d="M0.5 -12V0M5.5 0V-12L9.5 -1.5L13.5 -12V0M17 -10.5Q18 -12 20.5 -12Q24 -12 24 -9.2Q24 -6.5 20.5 -6.5Q25 -6.5 25 -3.2Q25 0 21 0Q18 0 17 -1.8"/></g><rect x="301.0" y="701.0" width="3" height="3" stroke="#2A8C8C" fill="none"/><g transform="translate(335.5,670.0) rotate(-90)" stroke="#fff" stroke-width="1.1" fill="none" shape-rendering="auto"><path d="M0.5 -12V0M5.5 0V-12L9.5 -1.5L13.5 -12V0M23 0V-12L17 -3.5H25.5"/></g><rect x="324.0" y="701.0" width="3" height="3" stroke="#2A8C8C" fill="none"/><path d="M365.5 637.5L365.5 708.5" stroke="#2A8C8C" stroke-width="1"/><path d="M344.5 642.5h2v2h-2zM344.5 646.5h2v2h-2zM344.5 650.5h2v2h-2zM344.5 654.5h2v2h-2zM344.5 658.5h2v2h-2zM344.5 662.5h2v2h-2zM344.5 666.5h2v2h-2zM344.5 670.5h2v2h-2zM344.5 674.5h2v2h-2zM344.5 678.5h2v2h-2zM344.5 682.5h2v2h-2zM344.5 686.5h2v2h-2zM344.5 690.5h2v2h-2zM344.5 694.5h2v2h-2zM344.5 698.5h2v2h-2z" stroke="#1E9A9A" fill="none"/><path d="M361.5 642.5h2v2h-2zM361.5 646.5h2v2h-2zM361.5 650.5h2v2h-2zM361.5 654.5h2v2h-2zM361.5 658.5h2v2h-2zM361.5 662.5h2v2h-2zM361.5 666.5h2v2h-2zM361.5 670.5h2v2h-2zM361.5 674.5h2v2h-2zM361.5 678.5h2v2h-2zM361.5 682.5h2v2h-2zM361.5 686.5h2v2h-2zM361.5 690.5h2v2h-2zM361.5 694.5h2v2h-2zM361.5 698.5h2v2h-2z" stroke="#1E9A9A" fill="none"/><rect x="347.5" y="643.0" width="12" height="60.0" stroke="#2A8C8C" fill="none"/><path d="M348 670.5H358" stroke="#fff" stroke-width="1"/><path d="M348.5 680.5V676.0L350.5 673.5H355.5L357.5 676.0V680.5Z" stroke="#fff" stroke-width="1" fill="none"/><path d="M388.5 637.5L388.5 708.5" stroke="#2A8C8C" stroke-width="1"/><path d="M367.5 642.5h2v2h-2zM367.5 646.5h2v2h-2zM367.5 650.5h2v2h-2zM367.5 654.5h2v2h-2zM367.5 658.5h2v2h-2zM367.5 662.5h2v2h-2zM367.5 666.5h2v2h-2zM367.5 670.5h2v2h-2zM367.5 674.5h2v2h-2zM367.5 678.5h2v2h-2zM367.5 682.5h2v2h-2zM367.5 686.5h2v2h-2zM367.5 690.5h2v2h-2zM367.5 694.5h2v2h-2zM367.5 698.5h2v2h-2z" stroke="#1E9A9A" fill="none"/><path d="M384.5 642.5h2v2h-2zM384.5 646.5h2v2h-2zM384.5 650.5h2v2h-2zM384.5 654.5h2v2h-2zM384.5 658.5h2v2h-2zM384.5 662.5h2v2h-2zM384.5 666.5h2v2h-2zM384.5 670.5h2v2h-2zM384.5 674.5h2v2h-2zM384.5 678.5h2v2h-2zM384.5 682.5h2v2h-2zM384.5 686.5h2v2h-2zM384.5 690.5h2v2h-2zM384.5 694.5h2v2h-2zM384.5 698.5h2v2h-2z" stroke="#1E9A9A" fill="none"/><rect x="370.5" y="643.0" width="12" height="60.0" stroke="#2A8C8C" fill="none"/><path d="M371 670.5H381" stroke="#fff" stroke-width="1"/><path d="M371.5 680.5V676.0L373.5 673.5H378.5L380.5 676.0V680.5Z" stroke="#fff" stroke-width="1" fill="none"/><path d="M411.5 637.5L411.5 708.5" stroke="#2A8C8C" stroke-width="1"/><path d="M390.5 642.5h2v2h-2zM390.5 646.5h2v2h-2zM390.5 650.5h2v2h-2zM390.5 654.5h2v2h-2zM390.5 658.5h2v2h-2zM390.5 662.5h2v2h-2zM390.5 666.5h2v2h-2zM390.5 670.5h2v2h-2zM390.5 674.5h2v2h-2zM390.5 678.5h2v2h-2zM390.5 682.5h2v2h-2zM390.5 686.5h2v2h-2zM390.5 690.5h2v2h-2zM390.5 694.5h2v2h-2zM390.5 698.5h2v2h-2z" stroke="#1E9A9A" fill="none"/><path d="M407.5 642.5h2v2h-2zM407.5 646.5h2v2h-2zM407.5 650.5h2v2h-2zM407.5 654.5h2v2h-2zM407.5 658.5h2v2h-2zM407.5 662.5h2v2h-2zM407.5 666.5h2v2h-2zM407.5 670.5h2v2h-2zM407.5 674.5h2v2h-2zM407.5 678.5h2v2h-2zM407.5 682.5h2v2h-2zM407.5 686.5h2v2h-2zM407.5 690.5h2v2h-2zM407.5 694.5h2v2h-2zM407.5 698.5h2v2h-2z" stroke="#1E9A9A" fill="none"/><rect x="393.5" y="643.0" width="12" height="60.0" stroke="#2A8C8C" fill="none"/><path d="M394 670.5H404" stroke="#fff" stroke-width="1"/><path d="M394.5 680.5V676.0L396.5 673.5H401.5L403.5 676.0V680.5Z" stroke="#fff" stroke-width="1" fill="none"/><path d="M434.5 637.5L434.5 708.5" stroke="#2A8C8C" stroke-width="1"/><path d="M413.5 642.5h2v2h-2zM413.5 646.5h2v2h-2zM413.5 650.5h2v2h-2zM413.5 654.5h2v2h-2zM413.5 658.5h2v2h-2zM413.5 662.5h2v2h-2zM413.5 666.5h2v2h-2zM413.5 670.5h2v2h-2zM413.5 674.5h2v2h-2zM413.5 678.5h2v2h-2zM413.5 682.5h2v2h-2zM413.5 686.5h2v2h-2zM413.5 690.5h2v2h-2zM413.5 694.5h2v2h-2zM413.5 698.5h2v2h-2z" stroke="#1E9A9A" fill="none"/><path d="M430.5 642.5h2v2h-2zM430.5 646.5h2v2h-2zM430.5 650.5h2v2h-2zM430.5 654.5h2v2h-2zM430.5 658.5h2v2h-2zM430.5 662.5h2v2h-2zM430.5 666.5h2v2h-2zM430.5 670.5h2v2h-2zM430.5 674.5h2v2h-2zM430.5 678.5h2v2h-2zM430.5 682.5h2v2h-2zM430.5 686.5h2v2h-2zM430.5 690.5h2v2h-2zM430.5 694.5h2v2h-2zM430.5 698.5h2v2h-2z" stroke="#1E9A9A" fill="none"/><rect x="416.5" y="643.0" width="12" height="60.0" stroke="#2A8C8C" fill="none"/><path d="M417 670.5H427" stroke="#fff" stroke-width="1"/><path d="M417.5 680.5V676.0L419.5 673.5H424.5L426.5 676.0V680.5Z" stroke="#fff" stroke-width="1" fill="none"/><path d="M457.5 637.5L457.5 708.5" stroke="#2A8C8C" stroke-width="1"/><path d="M436.5 642.5h2v2h-2zM436.5 646.5h2v2h-2zM436.5 650.5h2v2h-2zM436.5 654.5h2v2h-2zM436.5 658.5h2v2h-2zM436.5 662.5h2v2h-2zM436.5 666.5h2v2h-2zM436.5 670.5h2v2h-2zM436.5 674.5h2v2h-2zM436.5 678.5h2v2h-2zM436.5 682.5h2v2h-2zM436.5 686.5h2v2h-2zM436.5 690.5h2v2h-2zM436.5 694.5h2v2h-2zM436.5 698.5h2v2h-2z" stroke="#1E9A9A" fill="none"/><path d="M453.5 642.5h2v2h-2zM453.5 646.5h2v2h-2zM453.5 650.5h2v2h-2zM453.5 654.5h2v2h-2zM453.5 658.5h2v2h-2zM453.5 662.5h2v2h-2zM453.5 666.5h2v2h-2zM453.5 670.5h2v2h-2zM453.5 674.5h2v2h-2zM453.5 678.5h2v2h-2zM453.5 682.5h2v2h-2zM453.5 686.5h2v2h-2zM453.5 690.5h2v2h-2zM453.5 694.5h2v2h-2zM453.5 698.5h2v2h-2z" stroke="#1E9A9A" fill="none"/><rect x="439.5" y="643.0" width="12" height="60.0" stroke="#2A8C8C" fill="none"/><path d="M440 670.5H450" stroke="#fff" stroke-width="1"/><path d="M440.5 680.5V676.0L442.5 673.5H447.5L449.5 676.0V680.5Z" stroke="#fff" stroke-width="1" fill="none"/><path d="M480.5 637.5L480.5 708.5" stroke="#2A8C8C" stroke-width="1"/><path d="M459.5 642.5h2v2h-2zM459.5 646.5h2v2h-2zM459.5 650.5h2v2h-2zM459.5 654.5h2v2h-2zM459.5 658.5h2v2h-2zM459.5 662.5h2v2h-2zM459.5 666.5h2v2h-2zM459.5 670.5h2v2h-2zM459.5 674.5h2v2h-2zM459.5 678.5h2v2h-2zM459.5 682.5h2v2h-2zM459.5 686.5h2v2h-2zM459.5 690.5h2v2h-2zM459.5 694.5h2v2h-2zM459.5 698.5h2v2h-2z" stroke="#1E9A9A" fill="none"/><path d="M476.5 642.5h2v2h-2zM476.5 646.5h2v2h-2zM476.5 650.5h2v2h-2zM476.5 654.5h2v2h-2zM476.5 658.5h2v2h-2zM476.5 662.5h2v2h-2zM476.5 666.5h2v2h-2zM476.5 670.5h2v2h-2zM476.5 674.5h2v2h-2zM476.5 678.5h2v2h-2zM476.5 682.5h2v2h-2zM476.5 686.5h2v2h-2zM476.5 690.5h2v2h-2zM476.5 694.5h2v2h-2zM476.5 698.5h2v2h-2z" stroke="#1E9A9A" fill="none"/><rect x="462.5" y="643.0" width="12" height="60.0" stroke="#2A8C8C" fill="none"/><path d="M463 670.5H473" stroke="#fff" stroke-width="1"/><path d="M463.5 680.5V676.0L465.5 673.5H470.5L472.5 676.0V680.5Z" stroke="#fff" stroke-width="1" fill="none"/><path d="M503.5 637.5L503.5 708.5" stroke="#2A8C8C" stroke-width="1"/><path d="M482.5 642.5h2v2h-2zM482.5 646.5h2v2h-2zM482.5 650.5h2v2h-2zM482.5 654.5h2v2h-2zM482.5 658.5h2v2h-2zM482.5 662.5h2v2h-2zM482.5 666.5h2v2h-2zM482.5 670.5h2v2h-2zM482.5 674.5h2v2h-2zM482.5 678.5h2v2h-2zM482.5 682.5h2v2h-2zM482.5 686.5h2v2h-2zM482.5 690.5h2v2h-2zM482.5 694.5h2v2h-2zM482.5 698.5h2v2h-2z" stroke="#1E9A9A" fill="none"/><path d="M499.5 642.5h2v2h-2zM499.5 646.5h2v2h-2zM499.5 650.5h2v2h-2zM499.5 654.5h2v2h-2zM499.5 658.5h2v2h-2zM499.5 662.5h2v2h-2zM499.5 666.5h2v2h-2zM499.5 670.5h2v2h-2zM499.5 674.5h2v2h-2zM499.5 678.5h2v2h-2zM499.5 682.5h2v2h-2zM499.5 686.5h2v2h-2zM499.5 690.5h2v2h-2zM499.5 694.5h2v2h-2zM499.5 698.5h2v2h-2z" stroke="#1E9A9A" fill="none"/><rect x="485.5" y="643.0" width="12" height="60.0" stroke="#2A8C8C" fill="none"/><path d="M505.5 642.5h2v2h-2zM505.5 646.5h2v2h-2zM505.5 650.5h2v2h-2zM505.5 654.5h2v2h-2zM505.5 658.5h2v2h-2zM505.5 662.5h2v2h-2zM505.5 666.5h2v2h-2zM505.5 670.5h2v2h-2zM505.5 674.5h2v2h-2zM505.5 678.5h2v2h-2zM505.5 682.5h2v2h-2zM505.5 686.5h2v2h-2zM505.5 690.5h2v2h-2zM505.5 694.5h2v2h-2zM505.5 698.5h2v2h-2z" stroke="#1E9A9A" fill="none"/><path d="M522.5 642.5h2v2h-2zM522.5 646.5h2v2h-2zM522.5 650.5h2v2h-2zM522.5 654.5h2v2h-2zM522.5 658.5h2v2h-2zM522.5 662.5h2v2h-2zM522.5 666.5h2v2h-2zM522.5 670.5h2v2h-2zM522.5 674.5h2v2h-2zM522.5 678.5h2v2h-2zM522.5 682.5h2v2h-2zM522.5 686.5h2v2h-2zM522.5 690.5h2v2h-2zM522.5 694.5h2v2h-2zM522.5 698.5h2v2h-2z" stroke="#1E9A9A" fill="none"/><rect x="508.5" y="643.0" width="12" height="60.0" stroke="#2A8C8C" fill="none"/><rect x="527.5" y="637.5" width="34" height="71" stroke="#fff" fill="none"/><path d="M528 646.5H540.5V654.5H528M531.5 648.5H538.5V652.5H531.5Z" stroke="#fff" fill="none" stroke-width="1.2"/><path d="M528 658.5H540.5V666.5H528M531.5 660.5H538.5V664.5H531.5Z" stroke="#fff" fill="none" stroke-width="1.2"/><path d="M528 669.5H540.5V677.5H528M531.5 671.5H538.5V675.5H531.5Z" stroke="#fff" fill="none" stroke-width="1.2"/><path d="M528 681.5H540.5V689.5H528M531.5 683.5H538.5V687.5H531.5Z" stroke="#fff" fill="none" stroke-width="1.2"/><rect x="532.5" y="692.5" width="4" height="11" stroke="#fff" fill="none"/><circle cx="552" cy="654" r="2.5" stroke="#fff" fill="none" shape-rendering="auto"/><circle cx="552" cy="665" r="2.5" stroke="#fff" fill="none" shape-rendering="auto"/><circle cx="552" cy="686" r="2.5" stroke="#fff" fill="none" shape-rendering="auto"/><circle cx="552" cy="696" r="2.5" stroke="#fff" fill="none" shape-rendering="auto"/><path d="M280.6 473.6L283.3 468L290 469.6L288.6 460L298 447.6L310 442L331 442L344.6 451L352.5 460L356.5 475L359 488L358.5 509.6L355 528L347 540L335 545.5L306 545.5L296.6 537.5L294 515L292.6 488L290 469.6" stroke="#D01010" fill="none" stroke-linejoin="round" shape-rendering="auto"/></svg><div class="a" style="left:6px;top:750px;width:1140px;height:1px;background:#7A786C"></div>
<div class="a" style="left:6px;top:751px;width:1140px;height:1px;background:#111"></div>
<div class="a" style="left:6px;top:752px;width:1140px;height:1px;background:#fff"></div>
<div class="a" style="left:12px;top:760px;width:9px;height:45px;border-left:1px solid #fff;border-right:1px solid #C2BFA5"></div><div class="a" style="left:15px;top:760px;width:3px;height:45px;border-left:1px solid #C2BFA5;border-right:1px solid #fff"></div>
<div class="a" style="left:22px;top:756px;width:1116px;height:48px;background:#fff;border-top:1px solid #000;border-left:1px solid #000"></div>
<div class="a" style="left:23px;top:788px;width:1115px;height:1px;background:#A0A0A0"></div>
<div class="a" style="left:1121px;top:758px;width:17px;height:30px;background:#ECE9D8"></div>
<div class="a" style="left:1122px;top:759px;width:15px;height:13px;border:1px solid #fff;border-radius:2px;background:linear-gradient(135deg,#DCE6FB,#B9CBF3)"><svg class="a" style="left:2px;top:1px" width="9" height="9"><path d="M1 6L4.5 2.5L8 6" fill="none" stroke="#4D6185" stroke-width="2"/></svg></div>
<div class="a" style="left:1122px;top:773px;width:15px;height:13px;border:1px solid #fff;border-radius:2px;background:linear-gradient(135deg,#DCE6FB,#B9CBF3)"><svg class="a" style="left:2px;top:1px" width="9" height="9"><path d="M1 3L4.5 6.5L8 3" fill="none" stroke="#4D6185" stroke-width="2"/></svg></div>
<div class="a" style="left:1054px;top:789px;width:84px;height:17px;background:#F4F3EE"></div>
<div class="a" style="left:1056px;top:790px;width:15px;height:14px;border:1px solid #fff;border-radius:2px;background:linear-gradient(135deg,#DCE6FB,#B9CBF3)"><svg class="a" style="left:2px;top:1px" width="9" height="9"><path d="M6 1L2.5 4.5L6 8" fill="none" stroke="#4D6185" stroke-width="2"/></svg></div>
<div class="a" style="left:1072px;top:790px;width:16px;height:14px;border:1px solid #fff;border-radius:2px;background:linear-gradient(#C8D6F8,#B6C8F4)"><svg class="a" style="left:3px;top:3px" width="8" height="7"><path d="M0.5 0V8M2.5 0V8M4.5 0V8M6.5 0V8" stroke="#EEF3FE"/></svg></div>
<div class="a" style="left:1104px;top:790px;width:15px;height:14px;border:1px solid #fff;border-radius:2px;background:linear-gradient(135deg,#DCE6FB,#B9CBF3)"><svg class="a" style="left:2px;top:1px" width="9" height="9"><path d="M3 1L6.5 4.5L3 8" fill="none" stroke="#4D6185" stroke-width="2"/></svg></div>
<div class="a" style="left:25px;top:760px;font-family:'Liberation Mono',monospace;font-size:13.3px;line-height:12px;white-space:nowrap"><span style="font-size:15px;letter-spacing:0.5px">自动保存到</span> C:\Documents and Settings\Administrator\Local</div>
<div class="a" style="left:24px;top:773px;font-family:'Liberation Mono',monospace;font-size:13.3px;line-height:12px;white-space:nowrap">Settings\Temp\<span style="font-size:15px;letter-spacing:0.5px">控制机柜图</span>_1_1_9169.sv$ ...</div>
<div class="a" style="left:24px;top:792px;font-family:'Liberation Mono',monospace;font-size:13.3px;line-height:12px;white-space:nowrap"><span style="font-size:14px;letter-spacing:1.5px">命令</span>:</div>
<div class="a" style="left:6px;top:806px;width:1140px;height:1px;background:#D0CDBC"></div>
<div class="a" style="left:6px;top:808px;width:1140px;height:1px;background:#fff"></div>
<div class="a" style="left:10px;top:811px;width:250px;height:18px;border-top:1px solid #ACA899;border-left:1px solid #ACA899;border-bottom:1px solid #fff;border-right:1px solid #fff;background:#ECE9D8"></div>
<div class="a" style="left:12px;top:815px;font-family:'Liberation Mono',monospace;font-size:12px;line-height:14px;white-space:nowrap;transform:scaleX(0.833);transform-origin:0 0">6354.4760, 3010.6976, 0.0000</div>
<div class="a" style="left:265px;top:811px;width:28px;height:19px;border-top:1px solid #fff;border-left:1px solid #fff;border-bottom:1px solid #ACA899;border-right:1px solid #ACA899;font-size:12.5px;line-height:19px;text-align:center;white-space:nowrap">捕捉</div>
<div class="a" style="left:296px;top:811px;width:29px;height:19px;border-top:1px solid #fff;border-left:1px solid #fff;border-bottom:1px solid #ACA899;border-right:1px solid #ACA899;font-size:12.5px;line-height:19px;text-align:center;white-space:nowrap">栅格</div>
<div class="a" style="left:328px;top:811px;width:29px;height:19px;border-top:1px solid #716F64;border-left:1px solid #716F64;border-bottom:1px solid #fff;border-right:1px solid #fff;font-size:12.5px;line-height:19px;text-align:center;white-space:nowrap">正交</div>
<div class="a" style="left:360px;top:811px;width:30px;height:19px;border-top:1px solid #fff;border-left:1px solid #fff;border-bottom:1px solid #ACA899;border-right:1px solid #ACA899;font-size:12.5px;line-height:19px;text-align:center;white-space:nowrap">极轴</div>
<div class="a" style="left:393px;top:811px;width:53px;height:19px;border-top:1px solid #716F64;border-left:1px solid #716F64;border-bottom:1px solid #fff;border-right:1px solid #fff;font-size:12.5px;line-height:19px;text-align:center;white-space:nowrap">对象捕捉</div>
<div class="a" style="left:449px;top:811px;width:53px;height:19px;border-top:1px solid #fff;border-left:1px solid #fff;border-bottom:1px solid #ACA899;border-right:1px solid #ACA899;font-size:12.5px;line-height:19px;text-align:center;white-space:nowrap">对象追踪</div>
<div class="a" style="left:505px;top:811px;width:29px;height:19px;border-top:1px solid #fff;border-left:1px solid #fff;border-bottom:1px solid #ACA899;border-right:1px solid #ACA899;font-size:12.5px;line-height:19px;text-align:center;white-space:nowrap">线宽</div>
<div class="a" style="left:537px;top:811px;width:29px;height:19px;border-top:1px solid #716F64;border-left:1px solid #716F64;border-bottom:1px solid #fff;border-right:1px solid #fff;font-size:12.5px;line-height:19px;text-align:center;white-space:nowrap">模型</div>
<div class="a" style="left:1088px;top:811px;width:25px;height:19px;border-top:1px solid #ACA899;border-left:1px solid #ACA899;border-bottom:1px solid #fff;border-right:1px solid #fff"></div>
<svg class="a" style="left:1090px;top:812px" width="22" height="17"><path d="M4 14Q2 6 8 3L11 5Q7 8 8 13Z" fill="#fff" stroke="#6A7A9A"/><path d="M9 1L14 6" stroke="#6A7A9A"/><path d="M11 16L16 6L21 16Z" fill="#F8E838" stroke="#887820"/><path d="M16 9V12M16 13.5V15" stroke="#000" stroke-width="1.5"/></svg>
<svg class="a" style="left:1117px;top:818px" width="9" height="6"><path d="M0 0H9L4.5 5Z" fill="#000"/></svg>
<svg class="a" style="left:1132px;top:816px" width="12" height="12"><g fill="#C2BFA5"><rect x="9" y="1" width="2" height="2"/><rect x="6" y="4" width="2" height="2"/><rect x="9" y="4" width="2" height="2"/><rect x="3" y="7" width="2" height="2"/><rect x="6" y="7" width="2" height="2"/><rect x="9" y="7" width="2" height="2"/></g></svg>
<div class="a" style="left:0;top:832px;width:1152px;height:32px;background:linear-gradient(180deg,#1f2f86 0,#3165c4 3%,#3682e5 6%,#4490e6 10%,#3883e5 12%,#2b71e0 15%,#2663da 18%,#235bd6 20%,#2258d5 23%,#2157d6 38%,#245ddb 54%,#2562df 86%,#245fdc 89%,#2158d4 92%,#1d4ec0 95%,#1941a5 98%)"></div>
<div class="a" style="left:0;top:832px;width:97px;height:32px;border-radius:0 12px 12px 0;background:linear-gradient(180deg,#3C8F3C 0%,#56B856 8%,#3FA33F 20%,#36973A 60%,#2F8A2F 90%,#266F26 100%);box-shadow:inset -2px 0 3px #1E5A1E"></div>
<svg class="a" style="left:9px;top:838px" width="22" height="20"><path d="M2 4Q6 1 10 3V9Q6 7 2 10Z" fill="#F05A22"/><path d="M11 3Q15 5 20 2V8Q15 11 11 9Z" fill="#7DB724"/><path d="M2 11Q6 8 10 10V16Q6 14 2 17Z" fill="#2C8EE8"/><path d="M11 10Q15 12 20 9V15Q15 18 11 16Z" fill="#F8C21A"/></svg>
<div class="a" style="left:36px;top:835px;color:#fff;font-size:19px;line-height:26px;font-style:italic;text-shadow:1px 1px 1px #1A4A1A;letter-spacing:1px">开始</div>
<div class="tbtn" style="left:106px;width:159px;background:linear-gradient(#1B48A8,#1E52B7 20%,#1E52B7 80%,#2A5FC4);box-shadow:inset 1px 1px 2px #0A2A70"></div>
<div class="a" style="left:117px;top:842px;width:16px;height:16px;background:#1F7A8C;border:1px solid #BFF"><div class="a" style="left:2px;top:-2px;width:12px;height:16px;color:#fff;font:bold 14px 'Liberation Sans';text-align:center">a</div></div>
<div class="a mono" style="left:137px;top:843px;color:#fff;font-size:12px;line-height:14px;white-space:nowrap;transform:scaleX(0.833);transform-origin:0 0">AutoCAD 2004</div>
<div class="tbtn" style="left:267px;width:157px;background:linear-gradient(#5A9CF8,#3C81F3 15%,#3A7CF0 85%,#2E6AD8);box-shadow:inset -1px -1px 1px #2050B0"></div>
<div class="a" style="left:278px;top:842px;width:16px;height:16px;background:#1F7A8C;border:1px solid #BFF"><div class="a" style="left:2px;top:-2px;width:12px;height:16px;color:#fff;font:bold 14px 'Liberation Sans';text-align:center">a</div></div>
<div class="a mono" style="left:298px;top:843px;color:#fff;font-size:12px;line-height:14px;white-space:nowrap;transform:scaleX(0.833);transform-origin:0 0">AutoCAD 2004 - [...</div>
<div class="tbtn" style="left:427px;width:157px;background:linear-gradient(#5A9CF8,#3C81F3 15%,#3A7CF0 85%,#2E6AD8);box-shadow:inset -1px -1px 1px #2050B0"></div>
<svg class="a" style="left:438px;top:840px" width="16" height="18"><rect x="1.5" y="0.5" width="13" height="17" rx="2" fill="#B8C0D0" stroke="#556"/><rect x="3" y="2" width="10" height="4" fill="#E8F0E0"/><g fill="#445"><rect x="3" y="8" width="2" height="2"/><rect x="7" y="8" width="2" height="2"/><rect x="11" y="8" width="2" height="2"/><rect x="3" y="12" width="2" height="2"/><rect x="7" y="12" width="2" height="2"/><rect x="11" y="12" width="2" height="2"/></g></svg>
<div class="a" style="left:458px;top:842px;color:#fff;font-size:12px;line-height:16px;white-space:nowrap">计算器</div>
<div class="tbtn" style="left:588px;width:156px;background:linear-gradient(#5A9CF8,#3C81F3 15%,#3A7CF0 85%,#2E6AD8);box-shadow:inset -1px -1px 1px #2050B0"></div>
<svg class="a" style="left:597px;top:841px" width="18" height="16"><path d="M1 3H7L8 5H16V14H1Z" fill="#F8D878" stroke="#B08830"/><path d="M1 7H17L15 14H1Z" fill="#FCE8A0" stroke="#B08830"/></svg>
<div class="a" style="left:619px;top:842px;color:#fff;font-size:12px;line-height:16px;white-space:nowrap">西门子300学习主...</div>
<div class="tbtn" style="left:747px;width:158px;background:linear-gradient(#5A9CF8,#3C81F3 15%,#3A7CF0 85%,#2E6AD8);box-shadow:inset -1px -1px 1px #2050B0"></div>
<svg class="a" style="left:756px;top:840px" width="18" height="18"><circle cx="9" cy="9" r="8" fill="#3CB43C" stroke="#2A7A2A"/><circle cx="9" cy="9" r="4" fill="#fff"/><path d="M5 9H13" stroke="#3CB43C" stroke-width="1.5"/></svg>
<div class="a" style="left:778px;top:842px;color:#fff;font-size:12px;line-height:16px;white-space:nowrap">百度搜索_PCS7系...</div>
<div class="a mono" style="left:981px;top:842px;color:#fff;font-size:12px;line-height:14px;transform:scaleX(0.83);transform-origin:0 0">CH</div>
<svg class="a" style="left:1002px;top:842px" width="17" height="14"><rect x="0.5" y="3.5" width="16" height="9" fill="#F0F0F0" stroke="#222"/><g fill="#222"><rect x="2" y="5" width="2" height="2"/><rect x="5" y="5" width="2" height="2"/><rect x="8" y="5" width="2" height="2"/><rect x="11" y="5" width="2" height="2"/><rect x="4" y="9" width="9" height="2"/></g></svg>
<svg class="a" style="left:1025px;top:840px" width="14" height="16"><rect x="0.5" y="0.5" width="13" height="15" fill="#FFFFE0" stroke="#222"/><text x="7" y="13" text-anchor="middle" font-size="13" font-weight="bold" font-family="Liberation Sans" fill="#000">?</text></svg>
<svg class="a" style="left:1048px;top:838px" width="12" height="20"><rect x="4.5" y="1.5" width="6" height="5" fill="none" stroke="#fff"/><rect x="1.5" y="3.5" width="6" height="5" fill="#2157d6" stroke="#fff"/><path d="M3 14H9L6 18Z" fill="#fff"/></svg>
<div class="a" style="left:1075px;top:832px;width:77px;height:32px;background:linear-gradient(180deg,#0c59b9 1%,#139ee9 6%,#18b5f2 10%,#139beb 14%,#1290e8 19%,#0d8dea 63%,#0d9ff1 81%,#0f9eed 88%,#119be9 91%,#1392e2 94%,#137ed7 97%,#095bc9 100%);border-left:1px solid #1042AF;box-shadow:inset 1px 0 1px #18BBFF"></div>
<svg class="a" style="left:1067px;top:839px" width="18" height="18"><circle cx="9" cy="9" r="8" fill="#5DA0F8" stroke="#fff"/><path d="M11 4L6 9L11 14" fill="none" stroke="#fff" stroke-width="2"/></svg>
<svg class="a" style="left:1087px;top:840px" width="16" height="16"><rect x="0.5" y="0.5" width="15" height="15" fill="#1A5AC8" stroke="#fff"/><path d="M2 4Q8 14 14 4" fill="none" stroke="#fff" stroke-width="1.5"/><path d="M4 4Q8 9 12 4" fill="none" stroke="#fff"/></svg>
<div class="a mono" style="left:1109px;top:842px;color:#fff;font-size:12px;line-height:14px;transform:scaleX(0.83);transform-origin:0 0">11:27</div>
</body></html>
